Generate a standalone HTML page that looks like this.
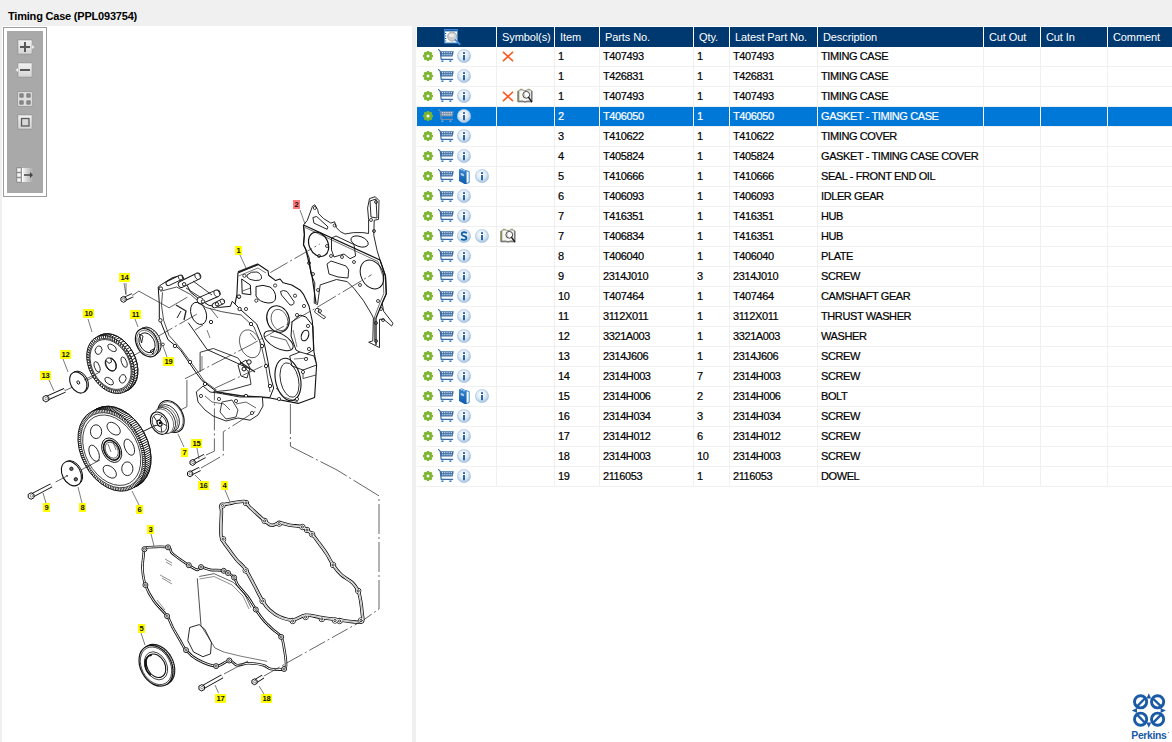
<!DOCTYPE html><html><head><meta charset="utf-8"><style>
*{margin:0;padding:0;box-sizing:border-box}
html,body{width:1172px;height:742px;overflow:hidden;background:#f0f0f0;font-family:"Liberation Sans",sans-serif}
.ab{position:absolute}
#title{left:8px;top:10px;font-size:11px;font-weight:bold;letter-spacing:-0.2px;color:#000;white-space:nowrap;line-height:13px}
#lp{left:2px;top:26px;width:410px;height:716px;background:#fff}
#rp{left:416px;top:26px;width:756px;height:716px;background:#fff}
.hd{background:#003870;height:20px;top:27px}
.ht{color:#fff;font-size:11px;line-height:20px;top:27px;white-space:nowrap;letter-spacing:-0.1px}
.vl{width:1px;background:#f0f0f0}
.hl{height:1px;background:#f0f0f0}
.tx{font-size:11px;line-height:19px;white-space:nowrap;color:#000;letter-spacing:-0.4px;-webkit-text-stroke:0.2px currentColor}
.sel{background:#0078d7;height:19px}
</style></head><body>

<svg width="0" height="0" style="position:absolute">
<defs>
<radialGradient id="ig" cx="0.45" cy="0.4" r="0.6"><stop offset="0" stop-color="#ffffff"/><stop offset="0.55" stop-color="#dfeaf5"/><stop offset="1" stop-color="#9fc0e0"/></radialGradient>
<symbol id="gear" viewBox="0 0 12 12">
<g fill="#7cb52e">
<circle cx="6" cy="6" r="3.9"/>
<rect x="4.8" y="0.9" width="2.4" height="10.2" rx="0.6"/>
<rect x="0.9" y="4.8" width="10.2" height="2.4" rx="0.6"/>
<rect x="4.8" y="0.9" width="2.4" height="10.2" rx="0.6" transform="rotate(45 6 6)"/>
<rect x="4.8" y="0.9" width="2.4" height="10.2" rx="0.6" transform="rotate(-45 6 6)"/>
</g>
<circle cx="6" cy="6" r="1.5" fill="#fff"/>
</symbol>
<symbol id="cart" viewBox="0 0 17 14">
<g fill="none" stroke="#3b6ca6" stroke-width="1.2" stroke-linecap="round" stroke-linejoin="round">
<path d="M0.6 0.6 L2.2 2.2 L3.2 10.4 L14.6 10.4"/>
</g>
<path d="M2.3 2.2 H15.8 L14.6 7.6 H3 Z" fill="#3b6ca6"/>
<g fill="#dfe8f2"><rect x="4" y="3.1" width="1.2" height="1.1"/><rect x="6.2" y="3.1" width="1.2" height="1.1"/><rect x="8.4" y="3.1" width="1.2" height="1.1"/><rect x="10.6" y="3.1" width="1.2" height="1.1"/><rect x="12.8" y="3.1" width="1.2" height="1.1"/>
<rect x="4.2" y="5.2" width="1.2" height="1.1"/><rect x="6.3" y="5.2" width="1.2" height="1.1"/><rect x="8.4" y="5.2" width="1.2" height="1.1"/><rect x="10.5" y="5.2" width="1.2" height="1.1"/><rect x="12.5" y="5.2" width="1.2" height="1.1"/></g>
<rect x="3.4" y="11.4" width="2" height="1.6" fill="#2f7fd0"/><rect x="11.4" y="11.4" width="2" height="1.6" fill="#2f7fd0"/>
</symbol>
<symbol id="carts" viewBox="0 0 17 14">
<g fill="none" stroke="#7a8da8" stroke-width="1.2" stroke-linecap="round" stroke-linejoin="round">
<path d="M0.6 0.6 L2.2 2.2 L3.2 10.4 L14.6 10.4"/>
</g>
<path d="M2.3 2.2 H15.8 L14.6 7.6 H3 Z" fill="#7a8da8"/>
<g fill="#dfe8f2"><rect x="4" y="3.1" width="1.2" height="1.1"/><rect x="6.2" y="3.1" width="1.2" height="1.1"/><rect x="8.4" y="3.1" width="1.2" height="1.1"/><rect x="10.6" y="3.1" width="1.2" height="1.1"/><rect x="12.8" y="3.1" width="1.2" height="1.1"/>
<rect x="4.2" y="5.2" width="1.2" height="1.1"/><rect x="6.3" y="5.2" width="1.2" height="1.1"/><rect x="8.4" y="5.2" width="1.2" height="1.1"/><rect x="10.5" y="5.2" width="1.2" height="1.1"/><rect x="12.5" y="5.2" width="1.2" height="1.1"/></g>
<rect x="3.4" y="11.4" width="2" height="1.6" fill="#8aa0c0"/><rect x="11.4" y="11.4" width="2" height="1.6" fill="#8aa0c0"/>
</symbol>
<symbol id="info" viewBox="0 0 15 15">
<circle cx="7" cy="7" r="6.8" fill="url(#ig)"/>
<circle cx="7" cy="7" r="6.5" fill="none" stroke="#a9c6e3" stroke-width="0.6"/>
<rect x="6" y="3.2" width="2" height="1.8" fill="#2e62a0"/>
<rect x="6" y="6" width="2" height="5.2" fill="#2e62a0"/>
</symbol>
<symbol id="sicon" viewBox="0 0 15 15">
<circle cx="7" cy="7" r="6.8" fill="url(#ig)"/>
<circle cx="7" cy="7" r="6.5" fill="none" stroke="#a9c6e3" stroke-width="0.6"/>
<path d="M9.7 4.3 Q8.7 3.2 7 3.2 Q4.6 3.3 4.7 5.3 Q4.8 6.6 7 7 Q9.4 7.4 9.4 9 Q9.3 10.8 7 10.8 Q5.1 10.8 4.2 9.8" fill="none" stroke="#0f60a3" stroke-width="1.8"/>
</symbol>
<symbol id="book" viewBox="0 0 11 17">
<linearGradient id="bkg" x1="0" y1="0" x2="0" y2="1"><stop offset="0" stop-color="#3a86cf"/><stop offset="1" stop-color="#0d5cae"/></linearGradient>
<path d="M7 2.6 L10.2 3.6 L10.2 14.4 L7 15.8 Z" fill="#fff" stroke="#2a7cc8" stroke-width="0.9"/>
<path d="M0 1.4 L2.6 0.2 L7.3 2.4 L7.3 15.9 L5.6 16 L0 12.9 Z" fill="url(#bkg)"/>
<path d="M1.2 1.6 L2.8 0.9 L4.2 1.6 L2.6 2.4 Z M3.6 2.6 L5 1.9 L6.4 2.7 L5 3.4 Z" fill="#bcd8f2"/>
<ellipse cx="3.4" cy="6.6" rx="2" ry="1.3" fill="#a9cbed" transform="rotate(25 3.4 6.6)"/>
</symbol>
<symbol id="xicon" viewBox="0 0 12 11">
<path d="M1 0.8 L11 10.2 M11 0.8 L1 10.2" stroke="#fb5a22" stroke-width="1.6" fill="none"/>
</symbol>
<symbol id="bookmag" viewBox="0 0 17 16">
<path d="M1.8 2.2 Q5 1.2 8 2.6 Q11 1.2 14.4 2.2 L14.4 13.2 Q11 12.2 8 13.6 Q5 12.2 1.8 13.2 Z" fill="#f6f6f2" stroke="#777" stroke-width="0.8"/>
<path d="M1 3 V13.8 L7.5 13.8 L8 14.5 L8.5 13.8 L15 13.8 V3" fill="none" stroke="#555" stroke-width="0.9"/>
<path d="M1 3 V13.8" stroke="#8a8a40" stroke-width="0.9"/>
<path d="M3 1.3 H5.5 M10.5 1.3 H13" stroke="#9a9a50" stroke-width="1"/>
<circle cx="9.3" cy="6.8" r="3.4" fill="#fff" fill-opacity="0.5" stroke="#333" stroke-width="0.9"/>
<path d="M7.2 5 Q6.8 7 8 9" stroke="#999" stroke-width="0.6" fill="none"/>
<path d="M11.6 9.4 L14.6 13.6" stroke="#1a1a1a" stroke-width="1.5" stroke-linecap="round"/>
</symbol>
<symbol id="hdicon" viewBox="0 0 17 16">
<rect x="0.5" y="0.5" width="13" height="13.5" fill="#fff" stroke="#3f86d0" stroke-width="1"/>
<rect x="1" y="1" width="12" height="1.4" fill="#1f5fa8"/>
<g fill="#1f5fa8"><rect x="1" y="4" width="1.3" height="1"/><rect x="1" y="6.5" width="1.3" height="1"/><rect x="1" y="9" width="1.3" height="1"/><rect x="1" y="11.5" width="1.3" height="1"/></g>
<circle cx="8.2" cy="7.6" r="4.6" fill="#cfcfcf" stroke="#9a9a9a" stroke-width="0.8"/>
<ellipse cx="7.6" cy="6.4" rx="2.8" ry="1.6" fill="#ececec"/>
<path d="M11.4 10.8 L15.6 15.2" stroke="#4a90d8" stroke-width="1.8" stroke-linecap="round"/>
</symbol>
</defs>
</svg>

<div id="title" class="ab">Timing Case (PPL093754)</div>
<div id="lp" class="ab"></div>
<div id="rp" class="ab"></div>
<div class="ab" style="left:3px;top:27px;width:44px;height:170px;border:1px solid #9c9c9c;background:#fff"></div>
<div class="ab" style="left:7px;top:31px;width:36px;height:162px;background:#a9a9a9"></div>
<svg class="ab" style="left:7px;top:31px" width="36" height="162" viewBox="7 31 36 162">
<defs>
<linearGradient id="bg1" x1="0" y1="0" x2="0" y2="1"><stop offset="0" stop-color="#f2f2f2"/><stop offset="1" stop-color="#d4d4d4"/></linearGradient>
<linearGradient id="bg2" x1="0" y1="0" x2="1" y2="0"><stop offset="0" stop-color="#f8f8f8"/><stop offset="0.6" stop-color="#c8c8c8"/><stop offset="1" stop-color="#a9a9a9"/></linearGradient>
</defs>
<!-- plus -->
<rect x="17.5" y="39.5" width="14.5" height="15" fill="#8a8a8a" opacity="0.5"/>
<rect x="18" y="40" width="14" height="14" fill="url(#bg1)" stroke="#9a9a9a" stroke-width="0.6"/>
<path d="M32 45 L34.5 47 L32 49 Z" fill="#eee"/>
<rect x="20" y="46" width="10" height="2" fill="#585858"/><rect x="24" y="42" width="2" height="10" fill="#585858"/>
<!-- minus -->
<rect x="17.5" y="62.5" width="14.5" height="15" fill="#8a8a8a" opacity="0.5"/>
<rect x="18" y="63" width="14" height="14" fill="url(#bg1)" stroke="#9a9a9a" stroke-width="0.6"/>
<path d="M18 68 L15.5 70 L18 72 Z" fill="#eee"/>
<rect x="20" y="69" width="10" height="2" fill="#585858"/>
<!-- grid -->
<rect x="17.5" y="91.5" width="14.5" height="15" fill="#8a8a8a" opacity="0.5"/>
<rect x="18" y="92" width="14" height="14" fill="#f4f4f4" stroke="#9a9a9a" stroke-width="0.6"/>
<rect x="24" y="93" width="2" height="12" fill="#dcdcdc"/><rect x="19" y="98" width="12" height="2" fill="#dcdcdc"/>
<g fill="#8c8c8c" stroke="#707070" stroke-width="0.8"><rect x="19.8" y="93.8" width="3.4" height="3.4"/><rect x="26.8" y="93.8" width="3.4" height="3.4"/><rect x="19.8" y="100.8" width="3.4" height="3.4"/><rect x="26.8" y="100.8" width="3.4" height="3.4"/></g>
<!-- square -->
<rect x="17.5" y="114.5" width="14.5" height="15" fill="#8a8a8a" opacity="0.5"/>
<rect x="18" y="115" width="14" height="14" fill="url(#bg1)" stroke="#9a9a9a" stroke-width="0.6"/>
<rect x="21.5" y="118.5" width="7.5" height="7.5" fill="#d8d8d8" stroke="#5a5a5a" stroke-width="1.3"/>
<!-- list arrow -->
<g stroke="#7a7a7a" stroke-width="0.8" fill="#f6f6f6"><rect x="16.8" y="167.8" width="4.4" height="4.4"/><rect x="16.8" y="172.8" width="4.4" height="4.4"/><rect x="16.8" y="177.8" width="4.4" height="4.4"/></g>
<rect x="22" y="168" width="11" height="14" fill="url(#bg2)"/>
<path d="M22.5 168 V182" stroke="#fff" stroke-width="1"/>
<path d="M24 174.3 H30 V172 L33 175 L30 178 V175.8 H24 Z" fill="#444"/>
</svg>

<svg class="ab" style="left:0;top:0" width="412" height="742" viewBox="0 0 412 742">
<path d="M312.5 206.2 L314.8 204.8 L317.6 209.5 L318.6 213.7 L323.3 218.4 L330.8 223.1 L334.6 221.8 L336.5 227.8 L340.3 231.6 L345.0 234.0 L353.5 232.6 L362.9 232.6 L368.6 233.5 L368.6 219.4 L367.6 208.0 L369.5 198.6 L375.2 196.7 L379.0 200.5 L378.5 219.4 L374.2 220.3 L373.8 235.4 L377.1 250.5 L380.0 260.0 L385.5 276.0 L386.3 293.7 L382.2 303.1 L383.6 311.2 L393.0 323.3 L391.6 326.0 L383.6 319.3 L379.5 319.3 L379.5 347.6 L368.7 342.2 L372.8 340.9 L373.4 318.0 L371.4 313.9 L363.3 300.4 L353.9 288.3 L347.2 281.6 L336.4 279.5 L320.2 284.9 L317.5 304.5 L314.2 303.1 L314.8 282.9 L310.8 273.5 L309.2 258.0 L305.4 248.6 L303.5 244.8 L304.4 234.5 L303.5 225.0 L307.3 220.3 Z" fill="#fff" stroke="#111" stroke-width="0.9" stroke-linejoin="round" />
<path d="M303.5 225 L380 260 L385.5 276 L386.3 293.7 L382.2 303.1 L376 318 L376 345" fill="none" stroke="#111" stroke-width="1.25" stroke-linejoin="round" />
<path d="M305 227.5 L378 261.5 L383 276.5 L383.8 293.5 L380 302.5 L374.5 317 L374.5 340" fill="none" stroke="#111" stroke-width="0.6" stroke-linejoin="round" />
<path d="M303.5 225 L304.4 234.5 L303.5 244.8 L306 250 L312 276 L316 303" fill="none" stroke="#111" stroke-width="1.25" stroke-linejoin="round" />
<path d="M316.0 308.5 L319.0 308.5 L318.0 312.0 L325.6 317.0 L324.0 319.0 L314.5 312.0 Z" fill="none" stroke="#111" stroke-width="0.8" stroke-linejoin="round" />
<ellipse cx="318.6" cy="244.3" rx="9.4" ry="12.7" fill="none" stroke="#111" stroke-width="1.2" transform="rotate(-25 318.6 244.3)"/>
<ellipse cx="372" cy="274.5" rx="11" ry="15" fill="none" stroke="#111" stroke-width="1" transform="rotate(-25 372 274.5)"/>
<path d="M312.9 217.5 L316.7 216.5 L328.0 226.9 L327.1 229.3 L313.9 223.1 Z" fill="none" stroke="#111" stroke-width="0.9" stroke-linejoin="round" />
<ellipse cx="359.6" cy="241.5" rx="9" ry="5" fill="none" stroke="#111" stroke-width="0.9" transform="rotate(20 359.6 241.5)"/>
<path d="M331.5 238.0 L336.0 236.0 L354.0 244.5 L355.6 256.0 L350.0 258.7 L344.0 254.0 L334.0 257.0 L331.5 250.0 Z" fill="none" stroke="#111" stroke-width="0.9" stroke-linejoin="round" />
<path d="M327.0 264.0 L331.0 261.0 L346.0 266.0 L348.7 270.0 L348.0 278.0 L338.0 277.0 L329.0 274.0 Z" fill="none" stroke="#111" stroke-width="0.9" stroke-linejoin="round" />
<path d="M370.0 201.0 L376.0 199.0 L377.0 218.0 L371.0 217.0 Z" fill="none" stroke="#111" stroke-width="0.9" stroke-linejoin="round" />
<circle cx="314.8" cy="208" r="1.5" fill="none" stroke="#111" stroke-width="0.8"/>
<circle cx="334.6" cy="225.5" r="1.5" fill="none" stroke="#111" stroke-width="0.8"/>
<circle cx="376" cy="202" r="1.5" fill="none" stroke="#111" stroke-width="0.8"/>
<circle cx="371" cy="220" r="1.5" fill="none" stroke="#111" stroke-width="0.8"/>
<circle cx="374" cy="231" r="1.5" fill="none" stroke="#111" stroke-width="0.8"/>
<circle cx="327" cy="246" r="1.5" fill="none" stroke="#111" stroke-width="0.8"/>
<circle cx="331" cy="256" r="1.5" fill="none" stroke="#111" stroke-width="0.8"/>
<circle cx="319" cy="256" r="1.5" fill="none" stroke="#111" stroke-width="0.8"/>
<circle cx="309" cy="263" r="1.5" fill="none" stroke="#111" stroke-width="0.8"/>
<circle cx="313" cy="274" r="1.5" fill="none" stroke="#111" stroke-width="0.8"/>
<circle cx="342" cy="257" r="1.5" fill="none" stroke="#111" stroke-width="0.8"/>
<circle cx="354" cy="262" r="1.5" fill="none" stroke="#111" stroke-width="0.8"/>
<circle cx="378" cy="301" r="1.5" fill="none" stroke="#111" stroke-width="0.8"/>
<circle cx="381" cy="309" r="1.5" fill="none" stroke="#111" stroke-width="0.8"/>
<circle cx="383" cy="320" r="1.5" fill="none" stroke="#111" stroke-width="0.8"/>
<circle cx="376" cy="341" r="1.5" fill="none" stroke="#111" stroke-width="0.8"/>
<circle cx="376" cy="323" r="1.5" fill="none" stroke="#111" stroke-width="0.8"/>
<circle cx="360" cy="285" r="1.5" fill="none" stroke="#111" stroke-width="0.8"/>
<circle cx="318" cy="290" r="1.5" fill="none" stroke="#111" stroke-width="0.8"/>
<circle cx="320" cy="311" r="1.5" fill="none" stroke="#111" stroke-width="0.8"/>
<path d="M237.9 273.1 L258.4 264.5 L268.1 271.0 L268.6 275.3 L275.6 280.6 L280.0 279.0 L283.2 282.8 L291.8 285.0 L300.4 290.3 L303.7 294.7 L309.0 306.0 L312.3 321.0 L313.4 340.5 L314.0 352.0 L316.6 365.0 L314.6 397.4 L298.2 403.4 L270.0 398.0 L242.0 396.0 L217.0 392.5 L236.9 294.7 Z" fill="#fff" stroke="#111" stroke-width="1.1" stroke-linejoin="round" />
<path d="M238.0 272.0 L258.4 264.0" fill="none" stroke="#222" stroke-width="1.8" />
<path d="M238.5 276.0 L258.0 268.0 L266.0 273.0" fill="none" stroke="#222" stroke-width="0.6" />
<path d="M241.7 279.0 L250.3 285.0 L250.9 294.7 L242.2 293.6 Z" fill="none" stroke="#111" stroke-width="1.0" stroke-linejoin="round" />
<path d="M242.5 291.0 L250.5 288.0" fill="none" stroke="#222" stroke-width="0.7" />
<path d="M247 275 Q251 271 257 272 Q262 274 261.5 278.5 Q260 281 255 280.5 Q249 280 247 277 Z" fill="none" stroke="#111" stroke-width="0.9" stroke-linejoin="round" />
<path d="M256 286.5 Q263 284 270 287 Q276 291 275.6 298 Q275 303.3 268 303 Q259 302 256 296 Z" fill="none" stroke="#111" stroke-width="1.0" stroke-linejoin="round" />
<path d="M280.5 291.5 Q283 289.5 287 291.5 L294 301.5 Q294.5 305.5 290 305 L281.5 295 Z" fill="none" stroke="#111" stroke-width="0.9" stroke-linejoin="round" />
<ellipse cx="278" cy="319" rx="11" ry="13.5" fill="none" stroke="#111" stroke-width="1.1" transform="rotate(-20 278 319)"/>
<ellipse cx="279.5" cy="320" rx="8" ry="11" fill="none" stroke="#111" stroke-width="0.6" transform="rotate(-20 279.5 320)"/>
<ellipse cx="278.6" cy="340.7" rx="16" ry="7.5" fill="none" stroke="#111" stroke-width="1.0" transform="rotate(28 278.6 340.7)"/>
<path d="M292.0 322.0 L300.0 315.0 L306.0 317.0 L313.0 326.0 L313.5 350.0 L305.0 355.0 L296.0 350.0 L291.0 336.0 Z" fill="none" stroke="#111" stroke-width="1.0" stroke-linejoin="round" />
<path d="M293.0 330.0 L297.0 347.0" fill="none" stroke="#222" stroke-width="0.6" />
<ellipse cx="305" cy="335.5" rx="3.5" ry="5.5" fill="none" stroke="#111" stroke-width="1.1" transform="rotate(20 305 335.5)"/>
<path d="M289.7 356.0 L300.0 352.0 L314.0 356.0 L316.6 365.0 L303.0 370.0 L292.0 366.0 Z" fill="#fff" stroke="#111" stroke-width="0.9" stroke-linejoin="round" />
<path d="M303.0 370.0 L303.0 378.5 L316.0 375.0" fill="none" stroke="#222" stroke-width="0.8" />
<path d="M294.0 359.0 L308.0 358.0" fill="none" stroke="#222" stroke-width="0.6" />
<ellipse cx="288" cy="379.5" rx="12.5" ry="21.5" fill="none" stroke="#111" stroke-width="1.1" transform="rotate(-12 288 379.5)"/>
<ellipse cx="289.5" cy="380" rx="9" ry="17.5" fill="none" stroke="#111" stroke-width="0.8" transform="rotate(-12 289.5 380)"/>
<path d="M270.0 336.0 L286.0 340.0 L291.0 350.0" fill="none" stroke="#222" stroke-width="0.7" />
<path d="M276.0 388.0 L284.0 397.0 L298.0 402.0" fill="none" stroke="#222" stroke-width="0.7" />
<circle cx="244.4" cy="275.8" r="1.6" fill="#fff" stroke="#111" stroke-width="0.8"/>
<circle cx="275.1" cy="285.5" r="1.6" fill="#fff" stroke="#111" stroke-width="0.8"/>
<circle cx="295" cy="295.7" r="1.6" fill="#fff" stroke="#111" stroke-width="0.8"/>
<circle cx="239" cy="296.8" r="1.6" fill="#fff" stroke="#111" stroke-width="0.8"/>
<circle cx="256.3" cy="300.6" r="1.6" fill="#fff" stroke="#111" stroke-width="0.8"/>
<circle cx="304" cy="306" r="1.6" fill="#fff" stroke="#111" stroke-width="0.8"/>
<circle cx="246" cy="309" r="1.6" fill="#fff" stroke="#111" stroke-width="0.8"/>
<circle cx="308" cy="326" r="1.6" fill="#fff" stroke="#111" stroke-width="0.8"/>
<circle cx="306" cy="359" r="1.6" fill="#fff" stroke="#111" stroke-width="0.8"/>
<circle cx="303" cy="372" r="1.6" fill="#fff" stroke="#111" stroke-width="0.8"/>
<circle cx="297" cy="399" r="1.6" fill="#fff" stroke="#111" stroke-width="0.8"/>
<circle cx="279" cy="399" r="1.6" fill="#fff" stroke="#111" stroke-width="0.8"/>
<circle cx="263" cy="395" r="1.6" fill="#fff" stroke="#111" stroke-width="0.8"/>
<circle cx="309" cy="349" r="1.6" fill="#fff" stroke="#111" stroke-width="0.8"/>
<circle cx="297" cy="315" r="1.6" fill="#fff" stroke="#111" stroke-width="0.8"/>
<path d="M158.2 287.0 L161.5 284.5 L172.2 277.8 L182.0 275.1 L186.0 283.0 L190.6 292.3 L200.3 299.9 L208.9 305.3 L219.7 307.4 L230.4 306.3 L232.2 301.3 L241.0 310.0 L256.7 324.0 L264.2 342.8 L268.0 361.7 L270.0 374.9 L273.7 388.1 L269.9 397.5 L241.6 395.7 L217.0 391.9 L202.0 380.6 L196.3 373.0 L180.2 349.6 L168.0 339.7 L163.6 329.0 L159.3 318.2 L159.3 303.1 Z" fill="#fff" stroke="#111" stroke-width="1.0" stroke-linejoin="round" />
<path d="M160.4 291.3 L176.6 287.0 L190.6 294.5 L205.6 307.4 L221.8 311.7 L241.2 315.0 L254.0 327.0 L261.0 344.0 L265.0 362.0 L268.0 380.0 L270.0 392.0" fill="none" stroke="#222" stroke-width="0.8" />
<path d="M162.5 292.3 L161.5 305.3 L163.6 320.3 L169.0 335.4 L181.0 349.0 L198.0 372.0 L204.0 381.0 L216.6 390.1" fill="none" stroke="#222" stroke-width="0.8" />
<path d="M168.3 283.3 L180.5 277.5" stroke="#111" stroke-width="5.5" stroke-linecap="round"/>
<path d="M168.3 283.3 L180.5 277.5" stroke="#fff" stroke-width="3.7" stroke-linecap="round"/>
<ellipse cx="180.5" cy="277.5" rx="2.55" ry="1.9249999999999998" transform="rotate(62 180.5 277.5)" fill="#fff" stroke="#111" stroke-width="0.8"/>
<path d="M181.4 284.3 L197.6 276.3" stroke="#111" stroke-width="7.2" stroke-linecap="round"/>
<path d="M181.4 284.3 L197.6 276.3" stroke="#fff" stroke-width="5.4" stroke-linecap="round"/>
<ellipse cx="197.6" cy="276.3" rx="3.4" ry="2.52" transform="rotate(62 197.6 276.3)" fill="#fff" stroke="#111" stroke-width="0.8"/>
<path d="M200.6 300.5 L216.8 293.4" stroke="#111" stroke-width="7.6" stroke-linecap="round"/>
<path d="M200.6 300.5 L216.8 293.4" stroke="#fff" stroke-width="5.8" stroke-linecap="round"/>
<ellipse cx="216.8" cy="293.4" rx="3.5999999999999996" ry="2.6599999999999997" transform="rotate(62 216.8 293.4)" fill="#fff" stroke="#111" stroke-width="0.8"/>
<path d="M214.5 305.5 L222.3 301.5" stroke="#111" stroke-width="5.5" stroke-linecap="round"/>
<path d="M214.5 305.5 L222.3 301.5" stroke="#fff" stroke-width="3.7" stroke-linecap="round"/>
<ellipse cx="222.3" cy="301.5" rx="2.55" ry="1.9249999999999998" transform="rotate(62 222.3 301.5)" fill="#fff" stroke="#111" stroke-width="0.8"/>
<path d="M186.0 288.0 L203.0 299.0" fill="none" stroke="#222" stroke-width="0.9" />
<path d="M193.0 281.0 L212.0 295.0" fill="none" stroke="#222" stroke-width="0.9" />
<circle cx="160.9" cy="288.6" r="1.7" fill="#fff" stroke="#111" stroke-width="0.9"/>
<circle cx="184.1" cy="284.2" r="1.7" fill="#fff" stroke="#111" stroke-width="0.9"/>
<circle cx="203" cy="301.5" r="1.7" fill="#fff" stroke="#111" stroke-width="0.9"/>
<circle cx="217" cy="304.2" r="1.7" fill="#fff" stroke="#111" stroke-width="0.9"/>
<circle cx="239.6" cy="309" r="1.7" fill="#fff" stroke="#111" stroke-width="0.9"/>
<circle cx="239" cy="296.6" r="1.7" fill="#fff" stroke="#111" stroke-width="0.9"/>
<circle cx="160.4" cy="320.3" r="1.7" fill="#fff" stroke="#111" stroke-width="0.9"/>
<circle cx="211" cy="322" r="1.7" fill="#fff" stroke="#111" stroke-width="0.9"/>
<circle cx="175" cy="346" r="1.7" fill="#fff" stroke="#111" stroke-width="0.9"/>
<circle cx="190" cy="362" r="1.7" fill="#fff" stroke="#111" stroke-width="0.9"/>
<circle cx="251" cy="324" r="1.7" fill="#fff" stroke="#111" stroke-width="0.9"/>
<circle cx="262" cy="346" r="1.7" fill="#fff" stroke="#111" stroke-width="0.9"/>
<circle cx="266" cy="366" r="1.7" fill="#fff" stroke="#111" stroke-width="0.9"/>
<circle cx="270" cy="386" r="1.7" fill="#fff" stroke="#111" stroke-width="0.9"/>
<circle cx="222" cy="394" r="1.7" fill="#fff" stroke="#111" stroke-width="0.9"/>
<circle cx="246" cy="396" r="1.7" fill="#fff" stroke="#111" stroke-width="0.9"/>
<circle cx="205" cy="384" r="1.7" fill="#fff" stroke="#111" stroke-width="0.9"/>
<ellipse cx="198.6" cy="313.4" rx="7.5" ry="11.5" fill="none" stroke="#111" stroke-width="0.9" transform="rotate(-20 198.6 313.4)"/>
<ellipse cx="250" cy="343.8" rx="10" ry="14.5" fill="none" stroke="#333" stroke-width="0.7" transform="rotate(-20 250 343.8)"/>
<path d="M176.0 305.0 L186.0 311.0 L184.0 320.0" fill="none" stroke="#222" stroke-width="1.3" />
<path d="M181.0 311.0 L177.0 318.0" fill="none" stroke="#222" stroke-width="1.0" />
<path d="M188.3 322.7 L207.2 349.6" fill="none" stroke="#222" stroke-width="1.0" />
<path d="M207.2 349.6 L249.0 368.5" fill="none" stroke="#222" stroke-width="1.0" />
<path d="M240.0 362.0 L255.0 372.0" fill="none" stroke="#222" stroke-width="1.4" />
<path d="M195.0 330.0 L203.0 325.0" fill="none" stroke="#222" stroke-width="0.7" />
<path d="M200.1 372.0 L200.1 352.3 L213.3 348.5 L237.8 357.9 L249.2 373.0 L251.0 384.3 L230.3 390.0 L213.3 391.9" fill="none" stroke="#222" stroke-width="0.9" />
<path d="M202.0 356.0 L202.0 370.0" fill="none" stroke="#222" stroke-width="0.6" />
<path d="M238.0 365.0 L246.0 360.0 L250.0 368.0 L247.0 378.0 L241.0 376.0 Z" fill="none" stroke="#111" stroke-width="0.9" stroke-linejoin="round" />
<circle cx="244" cy="369" r="2" fill="none" stroke="#111" stroke-width="1"/>
<circle cx="249" cy="362" r="2.2" fill="#fff" stroke="#111" stroke-width="1"/>
<path d="M210.0 308.0 L218.0 318.0" fill="none" stroke="#222" stroke-width="0.7" />
<path d="M207.0 330.0 L210.0 338.0" fill="none" stroke="#222" stroke-width="0.6" />
<path d="M250.0 333.0 L256.0 340.0" fill="none" stroke="#222" stroke-width="0.7" />
<path d="M196.3 391.9 L203.0 386.0 L210.0 392.0 L218.0 393.0 L240.0 397.0 L262.4 397.0 L263.0 406.0 L258.0 415.0 L250.0 420.2 L238.0 418.0 L226.0 421.0 L213.0 416.0 L205.0 410.0 L198.0 402.0 Z" fill="#fff" stroke="#111" stroke-width="0.9" stroke-linejoin="round" />
<path d="M205.0 396.0 L212.0 402.0 L224.0 404.0 L230.0 410.0" fill="none" stroke="#222" stroke-width="0.7" />
<path d="M236.0 404.0 L246.0 402.0 L256.0 408.0" fill="none" stroke="#222" stroke-width="0.7" />
<path d="M222.0 402.0 L232.0 400.0 L238.0 410.0 L236.0 417.0 L226.0 419.0 L220.0 412.0 Z" fill="none" stroke="#111" stroke-width="0.8" stroke-linejoin="round" />
<circle cx="201" cy="396" r="1.6" fill="#fff" stroke="#111" stroke-width="0.8"/>
<circle cx="219" cy="399" r="1.6" fill="#fff" stroke="#111" stroke-width="0.8"/>
<circle cx="236" cy="401" r="1.6" fill="#fff" stroke="#111" stroke-width="0.8"/>
<circle cx="252" cy="413" r="1.6" fill="#fff" stroke="#111" stroke-width="0.8"/>
<path d="M123.5 299.4 L132.6 295.3" stroke="#111" stroke-width="4.4" stroke-linecap="butt"/>
<path d="M123.5 299.4 L132.6 295.3" stroke="#fff" stroke-width="2.6000000000000005" stroke-linecap="butt"/>
<polygon points="126.1,300.9 123.5,302.4 120.9,300.9 120.9,297.9 123.5,296.4 126.1,297.9" fill="#fff" stroke="#111" stroke-width="1"/>
<circle cx="123.9" cy="299.2" r="1.3" fill="none" stroke="#444" stroke-width="0.6"/>
<path d="M132.6 295.3 L138.8 291.1 L169.1 307.8 L187.3 297.2" fill="none" stroke="#222" stroke-width="0.7" />
<line x1="124" y1="283" x2="126" y2="295" stroke="#222" stroke-width="0.6" />
<path d="M64.0 391.0 L86.0 381.0" fill="none" stroke="#222" stroke-width="0.7" />
<path d="M86.0 381.0 L140.0 352.0" fill="none" stroke="#222" stroke-width="0.7" />
<path d="M155.0 338.0 L199.2 312.8" fill="none" stroke="#222" stroke-width="0.7" stroke-dasharray="20 3 2 3"/>
<path d="M270.3 272.6 L319.8 244.0" fill="none" stroke="#222" stroke-width="0.7" stroke-dasharray="20 3 2 3"/>
<path d="M185.0 378.7 L200.1 371.1 L251.0 344.7 L314.3 309.0 L371.6 274.7" fill="none" stroke="#222" stroke-width="0.7" stroke-dasharray="22 3 2 3"/>
<path d="M156.0 425.0 L142.0 432.0" fill="none" stroke="#222" stroke-width="0.7" />
<path d="M215.2 388.0 L268.0 363.6" fill="none" stroke="#222" stroke-width="0.7" stroke-dasharray="22 3 2 3"/>
<g transform="translate(149.5 341.2) rotate(62) scale(1 0.7)">
<circle cx="0" cy="0" r="15" fill="#fff" stroke="#111" stroke-width="1.0" vector-effect="non-scaling-stroke" />
</g>
<path d="M140.0 329.5 l2.5 -1.5 M141.5 328.8 l2.5 -1.5 M143.2 328.6 l2.5 -1.5 M144.9 328.7 l2.5 -1.5 M146.8 329.1 l2.5 -1.5 M148.6 329.8 l2.5 -1.5 M150.4 330.9 l2.5 -1.5 M152.1 332.3 l2.5 -1.5 M153.6 333.9 l2.5 -1.5 M155.1 335.8 l2.5 -1.5 M156.3 337.8 l2.5 -1.5 M157.3 339.9 l2.5 -1.5 M158.0 342.1 l2.5 -1.5 M158.5 344.3 l2.5 -1.5 M158.6 346.5 l2.5 -1.5 M158.5 348.6 l2.5 -1.5 M158.1 350.5 l2.5 -1.5 M157.5 352.3 l2.5 -1.5 M156.6 353.8 l2.5 -1.5 M155.4 355.0 l2.5 -1.5" stroke="#555" stroke-width="0.6"/>
<g transform="translate(147 342.7) rotate(62) scale(1 0.7)">
<circle cx="0" cy="0" r="15" fill="#fff" stroke="#111" stroke-width="1.1" vector-effect="non-scaling-stroke" />
<circle cx="0" cy="0" r="10.5" fill="none" stroke="#111" stroke-width="1.0" vector-effect="non-scaling-stroke" />
<circle cx="0" cy="0" r="13.2" fill="none" stroke="#111" stroke-width="0.6" vector-effect="non-scaling-stroke" />
</g>
<path d="M139.5 334 L143 336 L141.5 343 Z" fill="none" stroke="#111" stroke-width="0.9" stroke-linejoin="round" />
<path d="M150 351 L154.5 348.5 L153 354 Z" fill="none" stroke="#111" stroke-width="0.9" stroke-linejoin="round" />
<line x1="135" y1="319" x2="138" y2="327" stroke="#222" stroke-width="0.6" />
<circle cx="162.9" cy="344.4" r="1.4" fill="none" stroke="#111" stroke-width="0.8"/>
<line x1="163" y1="346" x2="167" y2="357" stroke="#222" stroke-width="0.6" />
<g transform="translate(114.0 362.7) rotate(62) scale(1 0.7)">
<circle cx="0" cy="0" r="30.8" fill="#fff" stroke="#111" stroke-width="0.9" vector-effect="non-scaling-stroke" />
</g>
<path d="M125.06 391.69 l3.40 -1.80 M98.08 336.44 l3.40 -1.80 M100.13 335.85 l3.40 -1.80 M102.29 335.54 l3.40 -1.80 M104.53 335.50 l3.40 -1.80 M106.82 335.74 l3.40 -1.80 M109.15 336.26 l3.40 -1.80 M111.50 337.06 l3.40 -1.80 M113.84 338.11 l3.40 -1.80 M116.14 339.42 l3.40 -1.80 M118.39 340.98 l3.40 -1.80 M120.57 342.75 l3.40 -1.80 M122.65 344.74 l3.40 -1.80 M124.62 346.92 l3.40 -1.80 M126.45 349.27 l3.40 -1.80 M128.13 351.76 l3.40 -1.80 M129.64 354.38 l3.40 -1.80 M130.96 357.09 l3.40 -1.80 M132.09 359.88 l3.40 -1.80 M133.01 362.71 l3.40 -1.80 M133.72 365.56 l3.40 -1.80 M134.20 368.39 l3.40 -1.80 M134.46 371.19 l3.40 -1.80 M134.49 373.93 l3.40 -1.80 M134.29 376.57 l3.40 -1.80 M133.85 379.10 l3.40 -1.80 M133.20 381.49 l3.40 -1.80 M132.33 383.71 l3.40 -1.80 M131.24 385.75 l3.40 -1.80 M129.96 387.59 l3.40 -1.80 M128.50 389.20 l3.40 -1.80 M126.86 390.57 l3.40 -1.80" stroke="#111" stroke-width="0.95" fill="none"/>
<g transform="translate(114.0 362.7) rotate(62) scale(1 0.7)">
<circle cx="0" cy="0" r="30.8" fill="none" stroke="#111" stroke-width="0.9" vector-effect="non-scaling-stroke" />
</g>
<g transform="translate(110.6 364.5) rotate(62) scale(1 0.7)">
<circle cx="0" cy="0" r="30.8" fill="#fff" stroke="#111" stroke-width="1.0" vector-effect="non-scaling-stroke" />
<circle r="29.3" fill="none" stroke="#222" stroke-width="3.0" stroke-dasharray="1.44 1.44"/>
<circle cx="0" cy="0" r="27.6" fill="none" stroke="#111" stroke-width="0.8" vector-effect="non-scaling-stroke" />
<circle cx="0" cy="0" r="26.488" fill="none" stroke="#111" stroke-width="0.8" vector-effect="non-scaling-stroke" />
<ellipse cx="14.0" cy="13.0" rx="3.6" ry="5.6" transform="rotate(43 14.0 13.0)" fill="none" stroke="#111" stroke-width="0.9" vector-effect="non-scaling-stroke"/>
<ellipse cx="-4.3" cy="18.6" rx="3.6" ry="5.6" transform="rotate(103 -4.3 18.6)" fill="none" stroke="#111" stroke-width="0.9" vector-effect="non-scaling-stroke"/>
<ellipse cx="-18.3" cy="5.6" rx="3.6" ry="5.6" transform="rotate(163 -18.3 5.6)" fill="none" stroke="#111" stroke-width="0.9" vector-effect="non-scaling-stroke"/>
<ellipse cx="-14.0" cy="-13.0" rx="3.6" ry="5.6" transform="rotate(223 -14.0 -13.0)" fill="none" stroke="#111" stroke-width="0.9" vector-effect="non-scaling-stroke"/>
<ellipse cx="4.3" cy="-18.6" rx="3.6" ry="5.6" transform="rotate(283 4.3 -18.6)" fill="none" stroke="#111" stroke-width="0.9" vector-effect="non-scaling-stroke"/>
<ellipse cx="18.3" cy="-5.6" rx="3.6" ry="5.6" transform="rotate(343 18.3 -5.6)" fill="none" stroke="#111" stroke-width="0.9" vector-effect="non-scaling-stroke"/>
<circle cx="0" cy="0" r="7" fill="none" stroke="#111" stroke-width="1.0" vector-effect="non-scaling-stroke" />
</g>
<g transform="translate(111.2 364.5) rotate(62) scale(1 0.7)">
<path d="M-6 -4 A7 7 0 1 1 -6 4 L-2 2 L-2 -2 Z" fill="none" stroke="#111" stroke-width="0.9" vector-effect="non-scaling-stroke"/>
</g>
<g transform="translate(117.3 447.2) rotate(62) scale(1 0.7)">
<circle cx="0" cy="0" r="43.5" fill="#fff" stroke="#111" stroke-width="0.9" vector-effect="non-scaling-stroke" />
</g>
<path d="M91.28 411.79 l5.60 -3.00 M92.71 411.10 l5.60 -3.00 M94.20 410.51 l5.60 -3.00 M95.74 410.03 l5.60 -3.00 M97.31 409.66 l5.60 -3.00 M98.93 409.40 l5.60 -3.00 M100.59 409.25 l5.60 -3.00 M102.27 409.22 l5.60 -3.00 M103.98 409.30 l5.60 -3.00 M105.71 409.49 l5.60 -3.00 M107.46 409.79 l5.60 -3.00 M109.22 410.20 l5.60 -3.00 M110.98 410.72 l5.60 -3.00 M112.75 411.35 l5.60 -3.00 M114.51 412.09 l5.60 -3.00 M116.27 412.93 l5.60 -3.00 M118.02 413.88 l5.60 -3.00 M119.74 414.92 l5.60 -3.00 M121.45 416.06 l5.60 -3.00 M123.13 417.29 l5.60 -3.00 M124.77 418.62 l5.60 -3.00 M126.38 420.03 l5.60 -3.00 M127.95 421.52 l5.60 -3.00 M129.48 423.09 l5.60 -3.00 M130.96 424.74 l5.60 -3.00 M132.38 426.45 l5.60 -3.00 M133.75 428.23 l5.60 -3.00 M135.06 430.07 l5.60 -3.00 M136.30 431.97 l5.60 -3.00 M137.48 433.91 l5.60 -3.00 M138.59 435.90 l5.60 -3.00 M139.62 437.93 l5.60 -3.00 M140.57 440.00 l5.60 -3.00 M141.45 442.09 l5.60 -3.00 M142.24 444.20 l5.60 -3.00 M142.96 446.33 l5.60 -3.00 M143.58 448.47 l5.60 -3.00 M144.12 450.62 l5.60 -3.00 M144.57 452.76 l5.60 -3.00 M144.93 454.90 l5.60 -3.00 M145.19 457.02 l5.60 -3.00 M145.37 459.13 l5.60 -3.00 M145.45 461.21 l5.60 -3.00 M145.45 463.26 l5.60 -3.00 M145.35 465.28 l5.60 -3.00 M145.15 467.25 l5.60 -3.00 M144.87 469.18 l5.60 -3.00 M144.49 471.05 l5.60 -3.00 M144.02 472.87 l5.60 -3.00 M143.47 474.63 l5.60 -3.00 M142.83 476.31 l5.60 -3.00 M142.10 477.93 l5.60 -3.00 M141.29 479.47 l5.60 -3.00 M140.40 480.93 l5.60 -3.00 M139.43 482.31 l5.60 -3.00 M138.38 483.60 l5.60 -3.00 M137.27 484.80 l5.60 -3.00 M136.08 485.90 l5.60 -3.00 M134.82 486.90 l5.60 -3.00 M133.50 487.81 l5.60 -3.00" stroke="#111" stroke-width="0.95" fill="none"/>
<g transform="translate(117.3 447.2) rotate(62) scale(1 0.7)">
<circle cx="0" cy="0" r="43.5" fill="none" stroke="#111" stroke-width="0.9" vector-effect="non-scaling-stroke" />
</g>
<g transform="translate(111.7 450.2) rotate(62) scale(1 0.7)">
<circle cx="0" cy="0" r="43.5" fill="#fff" stroke="#111" stroke-width="1.0" vector-effect="non-scaling-stroke" />
<circle r="41.8" fill="none" stroke="#222" stroke-width="3.4" stroke-dasharray="1.09 1.09"/>
<circle cx="0" cy="0" r="39.9" fill="none" stroke="#111" stroke-width="0.8" vector-effect="non-scaling-stroke" />
<circle cx="0" cy="0" r="37.41" fill="none" stroke="#111" stroke-width="0.8" vector-effect="non-scaling-stroke" />
<ellipse cx="18.1" cy="16.9" rx="6.4" ry="8.6" transform="rotate(43 18.1 16.9)" fill="none" stroke="#111" stroke-width="0.9" vector-effect="non-scaling-stroke"/>
<ellipse cx="-5.6" cy="24.2" rx="6.4" ry="8.6" transform="rotate(103 -5.6 24.2)" fill="none" stroke="#111" stroke-width="0.9" vector-effect="non-scaling-stroke"/>
<ellipse cx="-23.7" cy="7.3" rx="6.4" ry="8.6" transform="rotate(163 -23.7 7.3)" fill="none" stroke="#111" stroke-width="0.9" vector-effect="non-scaling-stroke"/>
<ellipse cx="-18.1" cy="-16.9" rx="6.4" ry="8.6" transform="rotate(223 -18.1 -16.9)" fill="none" stroke="#111" stroke-width="0.9" vector-effect="non-scaling-stroke"/>
<ellipse cx="5.6" cy="-24.2" rx="6.4" ry="8.6" transform="rotate(283 5.6 -24.2)" fill="none" stroke="#111" stroke-width="0.9" vector-effect="non-scaling-stroke"/>
<ellipse cx="23.7" cy="-7.3" rx="6.4" ry="8.6" transform="rotate(343 23.7 -7.3)" fill="none" stroke="#111" stroke-width="0.9" vector-effect="non-scaling-stroke"/>
<circle cx="0" cy="0" r="13" fill="none" stroke="#111" stroke-width="1.0" vector-effect="non-scaling-stroke" />
</g>
<g transform="translate(111.7 450.2) rotate(62) scale(1 0.7)">
<circle cx="0" cy="0" r="10.5" fill="none" stroke="#111" stroke-width="1.5" vector-effect="non-scaling-stroke" />
<circle cx="0" cy="0" r="8.5" fill="none" stroke="#111" stroke-width="0.7" vector-effect="non-scaling-stroke" />
</g>
<path d="M103.0 447.0 L106.0 455.0" fill="none" stroke="#222" stroke-width="0.6" />
<path d="M108.0 444.0 L111.0 452.0" fill="none" stroke="#222" stroke-width="0.6" />
<path d="M113.0 442.0 L116.0 450.0" fill="none" stroke="#222" stroke-width="0.6" />
<g transform="translate(79.8 381.7) rotate(62) scale(1 0.7)">
<circle cx="0" cy="0" r="11.2" fill="#fff" stroke="#111" stroke-width="1.0" vector-effect="non-scaling-stroke" />
</g>
<g transform="translate(78.3 382.5) rotate(62) scale(1 0.7)">
<circle cx="0" cy="0" r="11.2" fill="#fff" stroke="#111" stroke-width="1.1" vector-effect="non-scaling-stroke" />
<circle cx="0" cy="0" r="1.8" fill="none" stroke="#111" stroke-width="1.0" vector-effect="non-scaling-stroke" />
</g>
<path d="M84.0 380.0 L100.0 372.0" fill="none" stroke="#222" stroke-width="0.7" />
<line x1="63" y1="359" x2="68" y2="372" stroke="#222" stroke-width="0.6" />
<path d="M45.9 398.7 L64.7 390.3" stroke="#111" stroke-width="4.8" stroke-linecap="butt"/>
<path d="M45.9 398.7 L64.7 390.3" stroke="#fff" stroke-width="3.0" stroke-linecap="butt"/>
<polygon points="48.8,400.3 45.9,402.0 43.0,400.3 43.0,397.1 45.9,395.4 48.8,397.1" fill="#fff" stroke="#111" stroke-width="1"/>
<circle cx="46.3" cy="398.5" r="1.3" fill="none" stroke="#444" stroke-width="0.6"/>
<line x1="49" y1="380" x2="54" y2="391" stroke="#222" stroke-width="0.6" />
<line x1="88" y1="319" x2="92" y2="332" stroke="#222" stroke-width="0.6" />
<g transform="translate(171 416.5) rotate(62) scale(1 0.7)">
<circle cx="0" cy="0" r="17" fill="#fff" stroke="#111" stroke-width="1.1" vector-effect="non-scaling-stroke" />
<circle cx="0" cy="0" r="15.8" fill="none" stroke="#111" stroke-width="0.6" vector-effect="non-scaling-stroke" />
</g>
<g transform="translate(168.2 418.2) rotate(62) scale(1 0.7)">
<circle cx="0" cy="0" r="14.5" fill="#fff" stroke="#111" stroke-width="0.9" vector-effect="non-scaling-stroke" />
</g>
<g transform="translate(166.6 419.3) rotate(62) scale(1 0.7)">
<circle cx="0" cy="0" r="14" fill="#fff" stroke="#111" stroke-width="0.6" vector-effect="non-scaling-stroke" />
</g>
<g transform="translate(165 420.3) rotate(62) scale(1 0.7)">
<circle cx="0" cy="0" r="13.6" fill="#fff" stroke="#111" stroke-width="0.9" vector-effect="non-scaling-stroke" />
</g>
<g transform="translate(163.4 421.3) rotate(62) scale(1 0.7)">
<circle cx="0" cy="0" r="13.2" fill="#fff" stroke="#111" stroke-width="0.6" vector-effect="non-scaling-stroke" />
</g>
<g transform="translate(159.5 423.2) rotate(62) scale(1 0.7)">
<circle cx="0" cy="0" r="11.8" fill="#fff" stroke="#111" stroke-width="1.1" vector-effect="non-scaling-stroke" />
<circle cx="0" cy="0" r="9.5" fill="none" stroke="#111" stroke-width="0.8" vector-effect="non-scaling-stroke" />
<circle cx="0" cy="0" r="3.2" fill="none" stroke="#111" stroke-width="1.2" vector-effect="non-scaling-stroke" />
</g>
<path d="M161.1 426.3 L161.7 432.1" stroke="#222" stroke-width="0.9"/>
<path d="M158.0 425.2 L153.5 426.0" stroke="#222" stroke-width="0.9"/>
<path d="M156.9 421.4 L153.6 416.0" stroke="#222" stroke-width="0.9"/>
<path d="M159.4 420.0 L161.9 415.9" stroke="#222" stroke-width="0.9"/>
<path d="M162.1 423.1 L166.9 425.9" stroke="#222" stroke-width="0.9"/>
<circle cx="160" cy="423" r="1.3" fill="#111"/>
<path d="M156.0 425.0 L142.0 432.0" fill="none" stroke="#222" stroke-width="0.7" />
<line x1="178" y1="434" x2="184" y2="447" stroke="#222" stroke-width="0.6" />
<path d="M180.4 410.0 L186.9 406.7 L186.9 380.0" fill="none" stroke="#222" stroke-width="0.7" />
<g transform="translate(72.6 472.9) rotate(62) scale(1 0.7)">
<circle cx="0" cy="0" r="13" fill="#fff" stroke="#111" stroke-width="1.0" vector-effect="non-scaling-stroke" />
</g>
<g transform="translate(71.4 473.6) rotate(62) scale(1 0.7)">
<circle cx="0" cy="0" r="13" fill="#fff" stroke="#111" stroke-width="1.1" vector-effect="non-scaling-stroke" />
</g>
<circle cx="71.4" cy="468.8" r="1.7" fill="#666" stroke="#111" stroke-width="0.9"/>
<circle cx="75.8" cy="479.3" r="1.7" fill="#666" stroke="#111" stroke-width="0.9"/>
<circle cx="67" cy="475.8" r="0.9" fill="#111"/>
<path d="M55.6 482.0 L66.0 476.5" fill="none" stroke="#222" stroke-width="0.7" />
<path d="M81.0 470.0 L100.0 460.0" fill="none" stroke="#222" stroke-width="0.7" />
<path d="M31.1 496 L51.3 485.4" stroke="#111" stroke-width="4.4" stroke-linecap="butt"/>
<path d="M31.1 496 L51.3 485.4" stroke="#fff" stroke-width="2.6000000000000005" stroke-linecap="butt"/>
<polygon points="34.0,497.6 31.1,499.3 28.2,497.6 28.2,494.4 31.1,492.7 34.0,494.4" fill="#fff" stroke="#111" stroke-width="1"/>
<circle cx="31.5" cy="495.8" r="1.3" fill="none" stroke="#444" stroke-width="0.6"/>
<line x1="43" y1="493" x2="46" y2="503" stroke="#222" stroke-width="0.6" />
<line x1="78" y1="487" x2="82" y2="503" stroke="#222" stroke-width="0.6" />
<line x1="132" y1="491" x2="139" y2="505" stroke="#222" stroke-width="0.6" />
<path d="M192.6 462.5 L204.7 456" stroke="#111" stroke-width="4.4" stroke-linecap="butt"/>
<path d="M192.6 462.5 L204.7 456" stroke="#fff" stroke-width="2.6000000000000005" stroke-linecap="butt"/>
<polygon points="195.2,464.0 192.6,465.5 190.0,464.0 190.0,461.0 192.6,459.5 195.2,461.0" fill="#fff" stroke="#111" stroke-width="1"/>
<circle cx="193.0" cy="462.3" r="1.3" fill="none" stroke="#444" stroke-width="0.6"/>
<path d="M190.1 473.8 L199.8 469" stroke="#111" stroke-width="4.4" stroke-linecap="butt"/>
<path d="M190.1 473.8 L199.8 469" stroke="#fff" stroke-width="2.6000000000000005" stroke-linecap="butt"/>
<polygon points="192.7,475.3 190.1,476.8 187.5,475.3 187.5,472.3 190.1,470.8 192.7,472.3" fill="#fff" stroke="#111" stroke-width="1"/>
<circle cx="190.5" cy="473.6" r="1.3" fill="none" stroke="#444" stroke-width="0.6"/>
<path d="M206.0 455.0 L214.4 451.2 L214.4 389.7" fill="none" stroke="#222" stroke-width="0.7" stroke-dasharray="22 3 2 3"/>
<path d="M201.0 468.0 L223.3 455.2 L223.3 431.8 L256.4 410.7" fill="none" stroke="#222" stroke-width="0.7" stroke-dasharray="22 3 2 3"/>
<line x1="197" y1="448" x2="199" y2="459" stroke="#222" stroke-width="0.6" />
<line x1="195" y1="475" x2="201" y2="481" stroke="#222" stroke-width="0.6" />
<path d="M290.4 404.0 L290.4 446.3 L337.0 470.0 L379.0 495.9 L379.0 609.0 L362.9 620.4" fill="none" stroke="#222" stroke-width="0.7" stroke-dasharray="30 3 2 3"/>
<circle cx="222.5" cy="505.5" r="2.7" fill="#fff" stroke="#111" stroke-width="0.9"/>
<circle cx="246" cy="503" r="2.7" fill="#fff" stroke="#111" stroke-width="0.9"/>
<circle cx="264.6" cy="520.9" r="2.7" fill="#fff" stroke="#111" stroke-width="0.9"/>
<circle cx="279.2" cy="523.6" r="2.7" fill="#fff" stroke="#111" stroke-width="0.9"/>
<circle cx="302.4" cy="527" r="2.7" fill="#fff" stroke="#111" stroke-width="0.9"/>
<circle cx="307" cy="530" r="2.7" fill="#fff" stroke="#111" stroke-width="0.9"/>
<circle cx="312.1" cy="534.3" r="2.7" fill="#fff" stroke="#111" stroke-width="0.9"/>
<circle cx="333.1" cy="565" r="2.7" fill="#fff" stroke="#111" stroke-width="0.9"/>
<circle cx="358.2" cy="590.9" r="2.7" fill="#fff" stroke="#111" stroke-width="0.9"/>
<circle cx="361" cy="620.5" r="2.7" fill="#fff" stroke="#111" stroke-width="0.9"/>
<circle cx="339.6" cy="621" r="2.7" fill="#fff" stroke="#111" stroke-width="0.9"/>
<circle cx="335" cy="620.5" r="2.7" fill="#fff" stroke="#111" stroke-width="0.9"/>
<circle cx="321.8" cy="619" r="2.7" fill="#fff" stroke="#111" stroke-width="0.9"/>
<circle cx="305.6" cy="617" r="2.7" fill="#fff" stroke="#111" stroke-width="0.9"/>
<circle cx="292.7" cy="621" r="2.7" fill="#fff" stroke="#111" stroke-width="0.9"/>
<circle cx="223.1" cy="539.2" r="2.7" fill="#fff" stroke="#111" stroke-width="0.9"/>
<circle cx="245.7" cy="570.5" r="2.7" fill="#fff" stroke="#111" stroke-width="0.9"/>
<circle cx="262.6" cy="601" r="2.7" fill="#fff" stroke="#111" stroke-width="0.9"/>
<path d="M220.9 505.8 C222.2 504.5 225.1 504.3 229.0 503.6 C232.9 502.9 240.7 500.9 244.1 501.5 C247.5 502.1 246.4 504.0 249.5 506.9 C252.6 509.8 258.8 515.7 262.4 518.7 C266.0 521.8 268.2 524.5 271.1 525.2 C274.0 525.9 276.4 523.0 279.7 523.0 C283.0 523.0 287.2 524.7 291.0 525.4 C294.8 526.1 298.9 525.5 302.4 527.0 C305.9 528.5 309.4 531.7 312.1 534.3 C314.8 536.9 316.1 539.2 318.5 542.4 C320.9 545.6 324.2 549.9 326.6 553.7 C329.0 557.5 330.7 561.5 333.1 565.0 C335.5 568.5 338.0 571.7 341.2 574.7 C344.4 577.7 349.7 580.1 352.5 582.8 C355.3 585.5 356.8 587.9 358.2 590.9 C359.6 593.9 359.9 596.8 360.6 600.6 C361.3 604.4 361.9 610.1 362.2 613.6 C362.5 617.1 363.8 620.4 362.2 621.7 C360.6 623.1 356.3 622.0 352.5 621.7 C348.7 621.4 344.7 620.7 339.6 620.0 C334.5 619.3 327.5 618.4 321.8 617.6 C316.1 616.8 310.5 614.8 305.6 615.2 C300.8 615.6 297.0 619.7 292.7 620.0 C288.4 620.3 283.5 618.4 279.7 616.8 C275.9 615.2 272.9 612.9 270.0 610.3 C267.1 607.7 266.6 607.6 262.6 601.0 C258.7 594.4 250.6 577.4 246.3 570.5 C242.0 563.6 239.8 563.7 236.6 559.7 C233.4 555.8 229.4 550.4 226.9 546.8 C224.4 543.2 222.5 541.4 221.5 538.1 C220.5 534.9 220.9 531.8 220.9 527.3 C220.9 522.8 221.5 514.8 221.5 511.2 C221.5 507.6 219.7 507.1 220.9 505.8 Z" fill="none" stroke="#111" stroke-width="3.4"/>
<path d="M220.9 505.8 C222.2 504.5 225.1 504.3 229.0 503.6 C232.9 502.9 240.7 500.9 244.1 501.5 C247.5 502.1 246.4 504.0 249.5 506.9 C252.6 509.8 258.8 515.7 262.4 518.7 C266.0 521.8 268.2 524.5 271.1 525.2 C274.0 525.9 276.4 523.0 279.7 523.0 C283.0 523.0 287.2 524.7 291.0 525.4 C294.8 526.1 298.9 525.5 302.4 527.0 C305.9 528.5 309.4 531.7 312.1 534.3 C314.8 536.9 316.1 539.2 318.5 542.4 C320.9 545.6 324.2 549.9 326.6 553.7 C329.0 557.5 330.7 561.5 333.1 565.0 C335.5 568.5 338.0 571.7 341.2 574.7 C344.4 577.7 349.7 580.1 352.5 582.8 C355.3 585.5 356.8 587.9 358.2 590.9 C359.6 593.9 359.9 596.8 360.6 600.6 C361.3 604.4 361.9 610.1 362.2 613.6 C362.5 617.1 363.8 620.4 362.2 621.7 C360.6 623.1 356.3 622.0 352.5 621.7 C348.7 621.4 344.7 620.7 339.6 620.0 C334.5 619.3 327.5 618.4 321.8 617.6 C316.1 616.8 310.5 614.8 305.6 615.2 C300.8 615.6 297.0 619.7 292.7 620.0 C288.4 620.3 283.5 618.4 279.7 616.8 C275.9 615.2 272.9 612.9 270.0 610.3 C267.1 607.7 266.6 607.6 262.6 601.0 C258.7 594.4 250.6 577.4 246.3 570.5 C242.0 563.6 239.8 563.7 236.6 559.7 C233.4 555.8 229.4 550.4 226.9 546.8 C224.4 543.2 222.5 541.4 221.5 538.1 C220.5 534.9 220.9 531.8 220.9 527.3 C220.9 522.8 221.5 514.8 221.5 511.2 C221.5 507.6 219.7 507.1 220.9 505.8 Z" fill="none" stroke="#fff" stroke-width="1.8"/>
<path d="M220.9 505.8 C222.2 504.5 225.1 504.3 229.0 503.6 C232.9 502.9 240.7 500.9 244.1 501.5 C247.5 502.1 246.4 504.0 249.5 506.9 C252.6 509.8 258.8 515.7 262.4 518.7 C266.0 521.8 268.2 524.5 271.1 525.2 C274.0 525.9 276.4 523.0 279.7 523.0 C283.0 523.0 287.2 524.7 291.0 525.4 C294.8 526.1 298.9 525.5 302.4 527.0 C305.9 528.5 309.4 531.7 312.1 534.3 C314.8 536.9 316.1 539.2 318.5 542.4 C320.9 545.6 324.2 549.9 326.6 553.7 C329.0 557.5 330.7 561.5 333.1 565.0 C335.5 568.5 338.0 571.7 341.2 574.7 C344.4 577.7 349.7 580.1 352.5 582.8 C355.3 585.5 356.8 587.9 358.2 590.9 C359.6 593.9 359.9 596.8 360.6 600.6 C361.3 604.4 361.9 610.1 362.2 613.6 C362.5 617.1 363.8 620.4 362.2 621.7 C360.6 623.1 356.3 622.0 352.5 621.7 C348.7 621.4 344.7 620.7 339.6 620.0 C334.5 619.3 327.5 618.4 321.8 617.6 C316.1 616.8 310.5 614.8 305.6 615.2 C300.8 615.6 297.0 619.7 292.7 620.0 C288.4 620.3 283.5 618.4 279.7 616.8 C275.9 615.2 272.9 612.9 270.0 610.3 C267.1 607.7 266.6 607.6 262.6 601.0 C258.7 594.4 250.6 577.4 246.3 570.5 C242.0 563.6 239.8 563.7 236.6 559.7 C233.4 555.8 229.4 550.4 226.9 546.8 C224.4 543.2 222.5 541.4 221.5 538.1 C220.5 534.9 220.9 531.8 220.9 527.3 C220.9 522.8 221.5 514.8 221.5 511.2 C221.5 507.6 219.7 507.1 220.9 505.8 Z" fill="none" stroke="#777" stroke-width="0.5"/>
<circle cx="222.5" cy="505.5" r="2.2" fill="#fff"/>
<circle cx="222.5" cy="505.5" r="1.1" fill="none" stroke="#111" stroke-width="0.8"/>
<circle cx="246" cy="503" r="2.2" fill="#fff"/>
<circle cx="246" cy="503" r="1.1" fill="none" stroke="#111" stroke-width="0.8"/>
<circle cx="264.6" cy="520.9" r="2.2" fill="#fff"/>
<circle cx="264.6" cy="520.9" r="1.1" fill="none" stroke="#111" stroke-width="0.8"/>
<circle cx="279.2" cy="523.6" r="2.2" fill="#fff"/>
<circle cx="279.2" cy="523.6" r="1.1" fill="none" stroke="#111" stroke-width="0.8"/>
<circle cx="302.4" cy="527" r="2.2" fill="#fff"/>
<circle cx="302.4" cy="527" r="1.1" fill="none" stroke="#111" stroke-width="0.8"/>
<circle cx="307" cy="530" r="2.2" fill="#fff"/>
<circle cx="307" cy="530" r="1.1" fill="none" stroke="#111" stroke-width="0.8"/>
<circle cx="312.1" cy="534.3" r="2.2" fill="#fff"/>
<circle cx="312.1" cy="534.3" r="1.1" fill="none" stroke="#111" stroke-width="0.8"/>
<circle cx="333.1" cy="565" r="2.2" fill="#fff"/>
<circle cx="333.1" cy="565" r="1.1" fill="none" stroke="#111" stroke-width="0.8"/>
<circle cx="358.2" cy="590.9" r="2.2" fill="#fff"/>
<circle cx="358.2" cy="590.9" r="1.1" fill="none" stroke="#111" stroke-width="0.8"/>
<circle cx="361" cy="620.5" r="2.2" fill="#fff"/>
<circle cx="361" cy="620.5" r="1.1" fill="none" stroke="#111" stroke-width="0.8"/>
<circle cx="339.6" cy="621" r="2.2" fill="#fff"/>
<circle cx="339.6" cy="621" r="1.1" fill="none" stroke="#111" stroke-width="0.8"/>
<circle cx="335" cy="620.5" r="2.2" fill="#fff"/>
<circle cx="335" cy="620.5" r="1.1" fill="none" stroke="#111" stroke-width="0.8"/>
<circle cx="321.8" cy="619" r="2.2" fill="#fff"/>
<circle cx="321.8" cy="619" r="1.1" fill="none" stroke="#111" stroke-width="0.8"/>
<circle cx="305.6" cy="617" r="2.2" fill="#fff"/>
<circle cx="305.6" cy="617" r="1.1" fill="none" stroke="#111" stroke-width="0.8"/>
<circle cx="292.7" cy="621" r="2.2" fill="#fff"/>
<circle cx="292.7" cy="621" r="1.1" fill="none" stroke="#111" stroke-width="0.8"/>
<circle cx="223.1" cy="539.2" r="2.2" fill="#fff"/>
<circle cx="223.1" cy="539.2" r="1.1" fill="none" stroke="#111" stroke-width="0.8"/>
<circle cx="245.7" cy="570.5" r="2.2" fill="#fff"/>
<circle cx="245.7" cy="570.5" r="1.1" fill="none" stroke="#111" stroke-width="0.8"/>
<circle cx="262.6" cy="601" r="2.2" fill="#fff"/>
<circle cx="262.6" cy="601" r="1.1" fill="none" stroke="#111" stroke-width="0.8"/>
<line x1="225" y1="490" x2="230" y2="502" stroke="#222" stroke-width="0.6" />
<path d="M144.4 549.2 C145.2 547.8 144.3 547.6 148.2 547.3 C152.1 547.0 164.1 546.4 168.0 547.3 C171.9 548.2 169.8 550.9 171.8 552.9 C173.9 554.9 177.5 557.5 180.3 559.5 C183.1 561.5 186.0 563.5 188.8 565.2 C191.6 566.9 195.3 569.6 197.3 569.9 C199.3 570.2 198.8 567.1 201.0 567.1 C203.2 567.1 206.7 569.3 210.5 569.9 C214.3 570.5 219.8 569.5 223.7 570.8 C227.6 572.1 231.8 575.1 234.1 577.5 C236.4 579.9 235.5 581.7 237.8 585.0 C240.2 588.3 245.2 593.2 248.2 597.3 C251.2 601.4 253.3 605.7 255.8 609.5 C258.3 613.3 260.5 616.6 263.3 619.9 C266.1 623.2 269.7 626.5 272.7 629.3 C275.7 632.1 279.3 633.8 281.2 636.9 C283.1 640.0 283.3 643.8 284.1 648.2 C284.9 652.6 286.0 659.8 286.0 663.3 C286.0 666.8 286.6 668.0 284.1 669.0 C281.6 670.0 274.3 669.6 270.8 669.0 C267.3 668.4 267.1 666.2 263.3 665.2 C259.5 664.2 252.6 663.3 248.2 663.3 C243.8 663.3 240.1 665.7 236.9 665.2 C233.8 664.7 232.8 660.4 229.3 660.5 C225.8 660.6 221.4 666.3 216.1 666.1 C210.8 665.9 202.3 662.2 197.3 659.5 C192.3 656.8 188.8 653.2 186.0 650.1 C183.2 647.0 182.5 644.5 180.3 640.7 C178.1 636.9 174.9 631.6 172.7 627.5 C170.5 623.4 170.2 620.5 167.1 616.1 C164.0 611.7 157.5 606.2 153.9 601.0 C150.3 595.8 147.3 590.3 145.4 585.0 C143.5 579.7 142.8 573.9 142.5 569.0 C142.2 564.1 143.2 559.1 143.5 555.8 C143.8 552.5 143.6 550.6 144.4 549.2 Z" fill="#fff" stroke="#111" stroke-width="2.6"/>
<path d="M144.4 549.2 C145.2 547.8 144.3 547.6 148.2 547.3 C152.1 547.0 164.1 546.4 168.0 547.3 C171.9 548.2 169.8 550.9 171.8 552.9 C173.9 554.9 177.5 557.5 180.3 559.5 C183.1 561.5 186.0 563.5 188.8 565.2 C191.6 566.9 195.3 569.6 197.3 569.9 C199.3 570.2 198.8 567.1 201.0 567.1 C203.2 567.1 206.7 569.3 210.5 569.9 C214.3 570.5 219.8 569.5 223.7 570.8 C227.6 572.1 231.8 575.1 234.1 577.5 C236.4 579.9 235.5 581.7 237.8 585.0 C240.2 588.3 245.2 593.2 248.2 597.3 C251.2 601.4 253.3 605.7 255.8 609.5 C258.3 613.3 260.5 616.6 263.3 619.9 C266.1 623.2 269.7 626.5 272.7 629.3 C275.7 632.1 279.3 633.8 281.2 636.9 C283.1 640.0 283.3 643.8 284.1 648.2 C284.9 652.6 286.0 659.8 286.0 663.3 C286.0 666.8 286.6 668.0 284.1 669.0 C281.6 670.0 274.3 669.6 270.8 669.0 C267.3 668.4 267.1 666.2 263.3 665.2 C259.5 664.2 252.6 663.3 248.2 663.3 C243.8 663.3 240.1 665.7 236.9 665.2 C233.8 664.7 232.8 660.4 229.3 660.5 C225.8 660.6 221.4 666.3 216.1 666.1 C210.8 665.9 202.3 662.2 197.3 659.5 C192.3 656.8 188.8 653.2 186.0 650.1 C183.2 647.0 182.5 644.5 180.3 640.7 C178.1 636.9 174.9 631.6 172.7 627.5 C170.5 623.4 170.2 620.5 167.1 616.1 C164.0 611.7 157.5 606.2 153.9 601.0 C150.3 595.8 147.3 590.3 145.4 585.0 C143.5 579.7 142.8 573.9 142.5 569.0 C142.2 564.1 143.2 559.1 143.5 555.8 C143.8 552.5 143.6 550.6 144.4 549.2 Z" fill="none" stroke="#fff" stroke-width="1.0"/>
<circle cx="144.4" cy="549.2" r="2.5" fill="#fff" stroke="#111" stroke-width="0.9"/>
<circle cx="144.4" cy="549.2" r="1.0" fill="none" stroke="#111" stroke-width="0.7"/>
<circle cx="168" cy="547.3" r="2.5" fill="#fff" stroke="#111" stroke-width="0.9"/>
<circle cx="168" cy="547.3" r="1.0" fill="none" stroke="#111" stroke-width="0.7"/>
<circle cx="188.8" cy="565.2" r="2.5" fill="#fff" stroke="#111" stroke-width="0.9"/>
<circle cx="188.8" cy="565.2" r="1.0" fill="none" stroke="#111" stroke-width="0.7"/>
<circle cx="201" cy="567.1" r="2.5" fill="#fff" stroke="#111" stroke-width="0.9"/>
<circle cx="201" cy="567.1" r="1.0" fill="none" stroke="#111" stroke-width="0.7"/>
<circle cx="223.7" cy="570.8" r="2.5" fill="#fff" stroke="#111" stroke-width="0.9"/>
<circle cx="223.7" cy="570.8" r="1.0" fill="none" stroke="#111" stroke-width="0.7"/>
<circle cx="228" cy="573" r="2.5" fill="#fff" stroke="#111" stroke-width="0.9"/>
<circle cx="228" cy="573" r="1.0" fill="none" stroke="#111" stroke-width="0.7"/>
<circle cx="234.1" cy="577.5" r="2.5" fill="#fff" stroke="#111" stroke-width="0.9"/>
<circle cx="234.1" cy="577.5" r="1.0" fill="none" stroke="#111" stroke-width="0.7"/>
<circle cx="255.8" cy="609.5" r="2.5" fill="#fff" stroke="#111" stroke-width="0.9"/>
<circle cx="255.8" cy="609.5" r="1.0" fill="none" stroke="#111" stroke-width="0.7"/>
<circle cx="281.2" cy="636.9" r="2.5" fill="#fff" stroke="#111" stroke-width="0.9"/>
<circle cx="281.2" cy="636.9" r="1.0" fill="none" stroke="#111" stroke-width="0.7"/>
<circle cx="284.1" cy="669" r="2.5" fill="#fff" stroke="#111" stroke-width="0.9"/>
<circle cx="284.1" cy="669" r="1.0" fill="none" stroke="#111" stroke-width="0.7"/>
<circle cx="229.3" cy="660.5" r="2.5" fill="#fff" stroke="#111" stroke-width="0.9"/>
<circle cx="229.3" cy="660.5" r="1.0" fill="none" stroke="#111" stroke-width="0.7"/>
<circle cx="216.1" cy="666.1" r="2.5" fill="#fff" stroke="#111" stroke-width="0.9"/>
<circle cx="216.1" cy="666.1" r="1.0" fill="none" stroke="#111" stroke-width="0.7"/>
<circle cx="186" cy="650.1" r="2.5" fill="#fff" stroke="#111" stroke-width="0.9"/>
<circle cx="186" cy="650.1" r="1.0" fill="none" stroke="#111" stroke-width="0.7"/>
<circle cx="167.1" cy="616.1" r="2.5" fill="#fff" stroke="#111" stroke-width="0.9"/>
<circle cx="167.1" cy="616.1" r="1.0" fill="none" stroke="#111" stroke-width="0.7"/>
<circle cx="145.4" cy="585" r="2.5" fill="#fff" stroke="#111" stroke-width="0.9"/>
<circle cx="145.4" cy="585" r="1.0" fill="none" stroke="#111" stroke-width="0.7"/>
<path d="M189.7 627.5 L199.2 624.6 L204.8 629.3 L211.4 642.5 L210.5 653.9 L202.9 656.7 L193.5 652 L187.8 640.7 Z" fill="none" stroke="#111" stroke-width="0.9" stroke-linejoin="round" />
<path d="M197.3 578.4 L199.0 600.0 L201.0 625.6" fill="none" stroke="#222" stroke-width="0.8" />
<path d="M199.2 576.5 L214.2 573.7 L233.1 582.2 L244.4 593.5 L251.0 607.6" fill="none" stroke="#222" stroke-width="0.7" />
<path d="M199.5 579.0 L214.0 576.5 L232.0 585.0 L243.0 596.0 L249.0 609.0" fill="none" stroke="#222" stroke-width="0.5" />
<path d="M223.7 652.0 L240.0 656.0 L267.1 661.4" fill="none" stroke="#222" stroke-width="0.6" />
<path d="M201.0 625.6 L215.0 648.0 L223.7 652.0" fill="none" stroke="#222" stroke-width="0.7" />
<line x1="151" y1="534" x2="154" y2="546" stroke="#222" stroke-width="0.6" />
<path d="M165.0 559.0 L172.0 563.0" fill="none" stroke="#222" stroke-width="0.5" />
<path d="M166.0 562.0 L172.0 565.5" fill="none" stroke="#222" stroke-width="0.5" />
<path d="M160.0 575.0 L171.0 581.0" fill="none" stroke="#222" stroke-width="0.5" />
<path d="M162.0 578.0 L172.0 584.0" fill="none" stroke="#222" stroke-width="0.5" />
<path d="M157.0 600.0 L165.0 610.0" fill="none" stroke="#222" stroke-width="0.5" />
<g transform="translate(157.8 664.8) rotate(62) scale(1 0.72)">
<circle cx="0" cy="0" r="21.5" fill="#fff" stroke="#111" stroke-width="1.1" vector-effect="non-scaling-stroke" />
</g>
<path d="M145.9 646.8 l1.8 -1.0 M147.5 646.1 l1.8 -1.0 M149.2 645.7 l1.8 -1.0 M151.0 645.5 l1.8 -1.0 M152.8 645.5 l1.8 -1.0 M154.7 645.9 l1.8 -1.0 M156.6 646.4 l1.8 -1.0 M158.5 647.2 l1.8 -1.0 M160.4 648.3 l1.8 -1.0 M162.2 649.5 l1.8 -1.0 M163.9 651.0 l1.8 -1.0 M165.6 652.7 l1.8 -1.0 M167.1 654.5 l1.8 -1.0 M168.5 656.5 l1.8 -1.0 M169.7 658.5 l1.8 -1.0 M170.7 660.7 l1.8 -1.0 M171.6 662.9 l1.8 -1.0 M172.2 665.2 l1.8 -1.0 M172.7 667.5 l1.8 -1.0 M172.9 669.7 l1.8 -1.0 M173.0 672.0 l1.8 -1.0 M172.8 674.1 l1.8 -1.0 M172.4 676.1 l1.8 -1.0 M171.8 678.0 l1.8 -1.0 M171.0 679.8 l1.8 -1.0 M170.0 681.3 l1.8 -1.0 M168.9 682.7 l1.8 -1.0 M167.6 683.9 l1.8 -1.0" stroke="#333" stroke-width="0.7"/>
<g transform="translate(156 665.8) rotate(62) scale(1 0.72)">
<circle cx="0" cy="0" r="21.5" fill="#fff" stroke="#111" stroke-width="1.2" vector-effect="non-scaling-stroke" />
<circle cx="0" cy="0" r="19.9" fill="none" stroke="#111" stroke-width="0.8" vector-effect="non-scaling-stroke" />
<circle cx="0" cy="0" r="14.8" fill="none" stroke="#111" stroke-width="0.8" vector-effect="non-scaling-stroke" />
<circle cx="0" cy="0" r="12.4" fill="none" stroke="#111" stroke-width="1.1" vector-effect="non-scaling-stroke" />
</g>
<g transform="translate(154.6 666.6) rotate(62) scale(1 0.72)">
<path d="M-11.5 -4 A12.2 12.2 0 0 0 6 10.5" fill="none" stroke="#111" stroke-width="1.6" vector-effect="non-scaling-stroke"/>
</g>
<line x1="141" y1="633" x2="145" y2="645" stroke="#222" stroke-width="0.6" />
<path d="M201.7 687.8 L222.2 676.3" stroke="#111" stroke-width="4.4" stroke-linecap="butt"/>
<path d="M201.7 687.8 L222.2 676.3" stroke="#fff" stroke-width="2.6000000000000005" stroke-linecap="butt"/>
<polygon points="204.5,689.4 201.7,691.0 198.9,689.4 198.9,686.2 201.7,684.6 204.5,686.2" fill="#fff" stroke="#111" stroke-width="1"/>
<circle cx="202.1" cy="687.5999999999999" r="1.3" fill="none" stroke="#444" stroke-width="0.6"/>
<path d="M254.5 681.8 L263 676.6" stroke="#111" stroke-width="4.4" stroke-linecap="butt"/>
<path d="M254.5 681.8 L263 676.6" stroke="#fff" stroke-width="2.6000000000000005" stroke-linecap="butt"/>
<polygon points="257.1,683.3 254.5,684.8 251.9,683.3 251.9,680.3 254.5,678.8 257.1,680.3" fill="#fff" stroke="#111" stroke-width="1"/>
<circle cx="254.9" cy="681.5999999999999" r="1.3" fill="none" stroke="#444" stroke-width="0.6"/>
<path d="M224.0 674.0 L248.0 661.0" fill="none" stroke="#222" stroke-width="0.7" />
<path d="M264.0 676.0 L288.5 662.0 L362.9 620.4" fill="none" stroke="#222" stroke-width="0.7" stroke-dasharray="18 3 2 3"/>
<line x1="215" y1="685" x2="218.5" y2="693" stroke="#222" stroke-width="0.6" />
<line x1="259" y1="686" x2="264" y2="694" stroke="#222" stroke-width="0.6" />
<line x1="300" y1="210" x2="305" y2="224" stroke="#222" stroke-width="0.6" />
<line x1="240" y1="255" x2="246" y2="268" stroke="#222" stroke-width="0.6" />
<line x1="126" y1="283" x2="126" y2="294" stroke="#222" stroke-width="0.6" />
<rect x="235" y="246" width="7" height="9" fill="#ffff00"/>
<text x="238.5" y="253.2" font-family="Liberation Sans" font-weight="bold" font-size="7.6" fill="#111" text-anchor="middle" letter-spacing="-0.3">1</text>
<rect x="119" y="273" width="11" height="9" fill="#ffff00"/>
<text x="124.5" y="280.2" font-family="Liberation Sans" font-weight="bold" font-size="7.6" fill="#111" text-anchor="middle" letter-spacing="-0.3">14</text>
<rect x="83" y="309" width="11" height="9" fill="#ffff00"/>
<text x="88.5" y="316.2" font-family="Liberation Sans" font-weight="bold" font-size="7.6" fill="#111" text-anchor="middle" letter-spacing="-0.3">10</text>
<rect x="130" y="310" width="11" height="9" fill="#ffff00"/>
<text x="135.5" y="317.2" font-family="Liberation Sans" font-weight="bold" font-size="7.6" fill="#111" text-anchor="middle" letter-spacing="-0.3">11</text>
<rect x="60" y="350" width="11" height="9" fill="#ffff00"/>
<text x="65.5" y="357.2" font-family="Liberation Sans" font-weight="bold" font-size="7.6" fill="#111" text-anchor="middle" letter-spacing="-0.3">12</text>
<rect x="40" y="371" width="11" height="9" fill="#ffff00"/>
<text x="45.5" y="378.2" font-family="Liberation Sans" font-weight="bold" font-size="7.6" fill="#111" text-anchor="middle" letter-spacing="-0.3">13</text>
<rect x="163" y="357" width="11" height="9" fill="#ffff00"/>
<text x="168.5" y="364.2" font-family="Liberation Sans" font-weight="bold" font-size="7.6" fill="#111" text-anchor="middle" letter-spacing="-0.3">19</text>
<rect x="181" y="448" width="7" height="9" fill="#ffff00"/>
<text x="184.5" y="455.2" font-family="Liberation Sans" font-weight="bold" font-size="7.6" fill="#111" text-anchor="middle" letter-spacing="-0.3">7</text>
<rect x="191" y="439" width="11" height="9" fill="#ffff00"/>
<text x="196.5" y="446.2" font-family="Liberation Sans" font-weight="bold" font-size="7.6" fill="#111" text-anchor="middle" letter-spacing="-0.3">15</text>
<rect x="198" y="481" width="11" height="9" fill="#ffff00"/>
<text x="203.5" y="488.2" font-family="Liberation Sans" font-weight="bold" font-size="7.6" fill="#111" text-anchor="middle" letter-spacing="-0.3">16</text>
<rect x="43" y="503" width="7" height="9" fill="#ffff00"/>
<text x="46.5" y="510.2" font-family="Liberation Sans" font-weight="bold" font-size="7.6" fill="#111" text-anchor="middle" letter-spacing="-0.3">9</text>
<rect x="79" y="503" width="7" height="9" fill="#ffff00"/>
<text x="82.5" y="510.2" font-family="Liberation Sans" font-weight="bold" font-size="7.6" fill="#111" text-anchor="middle" letter-spacing="-0.3">8</text>
<rect x="136" y="505" width="7" height="9" fill="#ffff00"/>
<text x="139.5" y="512.2" font-family="Liberation Sans" font-weight="bold" font-size="7.6" fill="#111" text-anchor="middle" letter-spacing="-0.3">6</text>
<rect x="221" y="481" width="7" height="9" fill="#ffff00"/>
<text x="224.5" y="488.2" font-family="Liberation Sans" font-weight="bold" font-size="7.6" fill="#111" text-anchor="middle" letter-spacing="-0.3">4</text>
<rect x="147" y="525" width="7" height="9" fill="#ffff00"/>
<text x="150.5" y="532.2" font-family="Liberation Sans" font-weight="bold" font-size="7.6" fill="#111" text-anchor="middle" letter-spacing="-0.3">3</text>
<rect x="138" y="624" width="7" height="9" fill="#ffff00"/>
<text x="141.5" y="631.2" font-family="Liberation Sans" font-weight="bold" font-size="7.6" fill="#111" text-anchor="middle" letter-spacing="-0.3">5</text>
<rect x="215" y="694" width="11" height="9" fill="#ffff00"/>
<text x="220.5" y="701.2" font-family="Liberation Sans" font-weight="bold" font-size="7.6" fill="#111" text-anchor="middle" letter-spacing="-0.3">17</text>
<rect x="261" y="694" width="11" height="9" fill="#ffff00"/>
<text x="266.5" y="701.2" font-family="Liberation Sans" font-weight="bold" font-size="7.6" fill="#111" text-anchor="middle" letter-spacing="-0.3">18</text>
<rect x="293" y="200" width="7" height="9" fill="#ff7a7a"/>
<text x="296.5" y="207.2" font-family="Liberation Sans" font-weight="bold" font-size="7.6" fill="#111" text-anchor="middle" letter-spacing="-0.3">2</text>
</svg>
<div class="ab hd" style="left:417px;width:79px"></div>
<div class="ab hd" style="left:497px;width:57px"></div>
<div class="ab ht" style="left:502px">Symbol(s)</div>
<div class="ab hd" style="left:555px;width:44px"></div>
<div class="ab ht" style="left:560px">Item</div>
<div class="ab hd" style="left:600px;width:93px"></div>
<div class="ab ht" style="left:605px">Parts No.</div>
<div class="ab hd" style="left:694px;width:35px"></div>
<div class="ab ht" style="left:699px">Qty.</div>
<div class="ab hd" style="left:730px;width:87px"></div>
<div class="ab ht" style="left:735px">Latest Part No.</div>
<div class="ab hd" style="left:818px;width:165px"></div>
<div class="ab ht" style="left:823px">Description</div>
<div class="ab hd" style="left:984px;width:56px"></div>
<div class="ab ht" style="left:989px">Cut Out</div>
<div class="ab hd" style="left:1041px;width:66px"></div>
<div class="ab ht" style="left:1046px">Cut In</div>
<div class="ab hd" style="left:1108px;width:64px"></div>
<div class="ab ht" style="left:1113px">Comment</div>
<svg class="ab" style="left:444px;top:29px" width="17" height="16"><use href="#hdicon"/></svg>
<div class="ab hl" style="left:417px;top:66px;width:755px"></div>
<svg class="ab" style="left:422px;top:50px" width="12" height="12"><use href="#gear"/></svg>
<svg class="ab" style="left:438px;top:49px" width="17" height="14"><use href="#cart"/></svg>
<svg class="ab" style="left:457px;top:49px" width="15" height="15"><use href="#info"/></svg>
<svg class="ab" style="left:502px;top:51px" width="12" height="11"><use href="#xicon"/></svg>
<div class="ab tx" style="left:558px;top:47px;color:#000">1</div>
<div class="ab tx" style="left:603px;top:47px;color:#000">T407493</div>
<div class="ab tx" style="left:697px;top:47px;color:#000">1</div>
<div class="ab tx" style="left:733px;top:47px;color:#000">T407493</div>
<div class="ab tx" style="left:821px;top:47px;color:#000">TIMING CASE</div>
<div class="ab hl" style="left:417px;top:86px;width:755px"></div>
<svg class="ab" style="left:422px;top:70px" width="12" height="12"><use href="#gear"/></svg>
<svg class="ab" style="left:438px;top:69px" width="17" height="14"><use href="#cart"/></svg>
<svg class="ab" style="left:457px;top:69px" width="15" height="15"><use href="#info"/></svg>
<div class="ab tx" style="left:558px;top:67px;color:#000">1</div>
<div class="ab tx" style="left:603px;top:67px;color:#000">T426831</div>
<div class="ab tx" style="left:697px;top:67px;color:#000">1</div>
<div class="ab tx" style="left:733px;top:67px;color:#000">T426831</div>
<div class="ab tx" style="left:821px;top:67px;color:#000">TIMING CASE</div>
<div class="ab hl" style="left:417px;top:106px;width:755px"></div>
<svg class="ab" style="left:422px;top:90px" width="12" height="12"><use href="#gear"/></svg>
<svg class="ab" style="left:438px;top:89px" width="17" height="14"><use href="#cart"/></svg>
<svg class="ab" style="left:457px;top:89px" width="15" height="15"><use href="#info"/></svg>
<svg class="ab" style="left:502px;top:91px" width="12" height="11"><use href="#xicon"/></svg>
<svg class="ab" style="left:517px;top:88px" width="17" height="16"><use href="#bookmag"/></svg>
<div class="ab tx" style="left:558px;top:87px;color:#000">1</div>
<div class="ab tx" style="left:603px;top:87px;color:#000">T407493</div>
<div class="ab tx" style="left:697px;top:87px;color:#000">1</div>
<div class="ab tx" style="left:733px;top:87px;color:#000">T407493</div>
<div class="ab tx" style="left:821px;top:87px;color:#000">TIMING CASE</div>
<div class="ab sel" style="left:417px;top:107px;width:79px"></div>
<div class="ab sel" style="left:497px;top:107px;width:57px"></div>
<div class="ab sel" style="left:555px;top:107px;width:44px"></div>
<div class="ab sel" style="left:600px;top:107px;width:93px"></div>
<div class="ab sel" style="left:694px;top:107px;width:35px"></div>
<div class="ab sel" style="left:730px;top:107px;width:87px"></div>
<div class="ab sel" style="left:818px;top:107px;width:165px"></div>
<div class="ab sel" style="left:984px;top:107px;width:56px"></div>
<div class="ab sel" style="left:1041px;top:107px;width:66px"></div>
<div class="ab sel" style="left:1108px;top:107px;width:64px"></div>
<div class="ab hl" style="left:417px;top:126px;width:755px"></div>
<svg class="ab" style="left:422px;top:110px" width="12" height="12"><use href="#gear"/></svg>
<svg class="ab" style="left:438px;top:109px" width="17" height="14"><use href="#carts"/></svg>
<svg class="ab" style="left:457px;top:109px" width="15" height="15"><use href="#info"/></svg>
<div class="ab tx" style="left:558px;top:107px;color:#fff">2</div>
<div class="ab tx" style="left:603px;top:107px;color:#fff">T406050</div>
<div class="ab tx" style="left:697px;top:107px;color:#fff">1</div>
<div class="ab tx" style="left:733px;top:107px;color:#fff">T406050</div>
<div class="ab tx" style="left:821px;top:107px;color:#fff">GASKET - TIMING CASE</div>
<div class="ab hl" style="left:417px;top:146px;width:755px"></div>
<svg class="ab" style="left:422px;top:130px" width="12" height="12"><use href="#gear"/></svg>
<svg class="ab" style="left:438px;top:129px" width="17" height="14"><use href="#cart"/></svg>
<svg class="ab" style="left:457px;top:129px" width="15" height="15"><use href="#info"/></svg>
<div class="ab tx" style="left:558px;top:127px;color:#000">3</div>
<div class="ab tx" style="left:603px;top:127px;color:#000">T410622</div>
<div class="ab tx" style="left:697px;top:127px;color:#000">1</div>
<div class="ab tx" style="left:733px;top:127px;color:#000">T410622</div>
<div class="ab tx" style="left:821px;top:127px;color:#000">TIMING COVER</div>
<div class="ab hl" style="left:417px;top:166px;width:755px"></div>
<svg class="ab" style="left:422px;top:150px" width="12" height="12"><use href="#gear"/></svg>
<svg class="ab" style="left:438px;top:149px" width="17" height="14"><use href="#cart"/></svg>
<svg class="ab" style="left:457px;top:149px" width="15" height="15"><use href="#info"/></svg>
<div class="ab tx" style="left:558px;top:147px;color:#000">4</div>
<div class="ab tx" style="left:603px;top:147px;color:#000">T405824</div>
<div class="ab tx" style="left:697px;top:147px;color:#000">1</div>
<div class="ab tx" style="left:733px;top:147px;color:#000">T405824</div>
<div class="ab tx" style="left:821px;top:147px;color:#000">GASKET - TIMING CASE COVER</div>
<div class="ab hl" style="left:417px;top:186px;width:755px"></div>
<svg class="ab" style="left:422px;top:170px" width="12" height="12"><use href="#gear"/></svg>
<svg class="ab" style="left:438px;top:169px" width="17" height="14"><use href="#cart"/></svg>
<svg class="ab" style="left:459px;top:168px" width="11" height="17"><use href="#book"/></svg>
<svg class="ab" style="left:475px;top:169px" width="15" height="15"><use href="#info"/></svg>
<div class="ab tx" style="left:558px;top:167px;color:#000">5</div>
<div class="ab tx" style="left:603px;top:167px;color:#000">T410666</div>
<div class="ab tx" style="left:697px;top:167px;color:#000">1</div>
<div class="ab tx" style="left:733px;top:167px;color:#000">T410666</div>
<div class="ab tx" style="left:821px;top:167px;color:#000">SEAL - FRONT END OIL</div>
<div class="ab hl" style="left:417px;top:206px;width:755px"></div>
<svg class="ab" style="left:422px;top:190px" width="12" height="12"><use href="#gear"/></svg>
<svg class="ab" style="left:438px;top:189px" width="17" height="14"><use href="#cart"/></svg>
<svg class="ab" style="left:457px;top:189px" width="15" height="15"><use href="#info"/></svg>
<div class="ab tx" style="left:558px;top:187px;color:#000">6</div>
<div class="ab tx" style="left:603px;top:187px;color:#000">T406093</div>
<div class="ab tx" style="left:697px;top:187px;color:#000">1</div>
<div class="ab tx" style="left:733px;top:187px;color:#000">T406093</div>
<div class="ab tx" style="left:821px;top:187px;color:#000">IDLER GEAR</div>
<div class="ab hl" style="left:417px;top:226px;width:755px"></div>
<svg class="ab" style="left:422px;top:210px" width="12" height="12"><use href="#gear"/></svg>
<svg class="ab" style="left:438px;top:209px" width="17" height="14"><use href="#cart"/></svg>
<svg class="ab" style="left:457px;top:209px" width="15" height="15"><use href="#info"/></svg>
<div class="ab tx" style="left:558px;top:207px;color:#000">7</div>
<div class="ab tx" style="left:603px;top:207px;color:#000">T416351</div>
<div class="ab tx" style="left:697px;top:207px;color:#000">1</div>
<div class="ab tx" style="left:733px;top:207px;color:#000">T416351</div>
<div class="ab tx" style="left:821px;top:207px;color:#000">HUB</div>
<div class="ab hl" style="left:417px;top:246px;width:755px"></div>
<svg class="ab" style="left:422px;top:230px" width="12" height="12"><use href="#gear"/></svg>
<svg class="ab" style="left:438px;top:229px" width="17" height="14"><use href="#cart"/></svg>
<svg class="ab" style="left:457px;top:229px" width="15" height="15"><use href="#sicon"/></svg>
<svg class="ab" style="left:475px;top:229px" width="15" height="15"><use href="#info"/></svg>
<svg class="ab" style="left:500px;top:228px" width="17" height="16"><use href="#bookmag"/></svg>
<div class="ab tx" style="left:558px;top:227px;color:#000">7</div>
<div class="ab tx" style="left:603px;top:227px;color:#000">T406834</div>
<div class="ab tx" style="left:697px;top:227px;color:#000">1</div>
<div class="ab tx" style="left:733px;top:227px;color:#000">T416351</div>
<div class="ab tx" style="left:821px;top:227px;color:#000">HUB</div>
<div class="ab hl" style="left:417px;top:266px;width:755px"></div>
<svg class="ab" style="left:422px;top:250px" width="12" height="12"><use href="#gear"/></svg>
<svg class="ab" style="left:438px;top:249px" width="17" height="14"><use href="#cart"/></svg>
<svg class="ab" style="left:457px;top:249px" width="15" height="15"><use href="#info"/></svg>
<div class="ab tx" style="left:558px;top:247px;color:#000">8</div>
<div class="ab tx" style="left:603px;top:247px;color:#000">T406040</div>
<div class="ab tx" style="left:697px;top:247px;color:#000">1</div>
<div class="ab tx" style="left:733px;top:247px;color:#000">T406040</div>
<div class="ab tx" style="left:821px;top:247px;color:#000">PLATE</div>
<div class="ab hl" style="left:417px;top:286px;width:755px"></div>
<svg class="ab" style="left:422px;top:270px" width="12" height="12"><use href="#gear"/></svg>
<svg class="ab" style="left:438px;top:269px" width="17" height="14"><use href="#cart"/></svg>
<svg class="ab" style="left:457px;top:269px" width="15" height="15"><use href="#info"/></svg>
<div class="ab tx" style="left:558px;top:267px;color:#000">9</div>
<div class="ab tx" style="left:603px;top:267px;color:#000">2314J010</div>
<div class="ab tx" style="left:697px;top:267px;color:#000">3</div>
<div class="ab tx" style="left:733px;top:267px;color:#000">2314J010</div>
<div class="ab tx" style="left:821px;top:267px;color:#000">SCREW</div>
<div class="ab hl" style="left:417px;top:306px;width:755px"></div>
<svg class="ab" style="left:422px;top:290px" width="12" height="12"><use href="#gear"/></svg>
<svg class="ab" style="left:438px;top:289px" width="17" height="14"><use href="#cart"/></svg>
<svg class="ab" style="left:457px;top:289px" width="15" height="15"><use href="#info"/></svg>
<div class="ab tx" style="left:558px;top:287px;color:#000">10</div>
<div class="ab tx" style="left:603px;top:287px;color:#000">T407464</div>
<div class="ab tx" style="left:697px;top:287px;color:#000">1</div>
<div class="ab tx" style="left:733px;top:287px;color:#000">T407464</div>
<div class="ab tx" style="left:821px;top:287px;color:#000">CAMSHAFT GEAR</div>
<div class="ab hl" style="left:417px;top:326px;width:755px"></div>
<svg class="ab" style="left:422px;top:310px" width="12" height="12"><use href="#gear"/></svg>
<svg class="ab" style="left:438px;top:309px" width="17" height="14"><use href="#cart"/></svg>
<svg class="ab" style="left:457px;top:309px" width="15" height="15"><use href="#info"/></svg>
<div class="ab tx" style="left:558px;top:307px;color:#000">11</div>
<div class="ab tx" style="left:603px;top:307px;color:#000">3112X011</div>
<div class="ab tx" style="left:697px;top:307px;color:#000">1</div>
<div class="ab tx" style="left:733px;top:307px;color:#000">3112X011</div>
<div class="ab tx" style="left:821px;top:307px;color:#000">THRUST WASHER</div>
<div class="ab hl" style="left:417px;top:346px;width:755px"></div>
<svg class="ab" style="left:422px;top:330px" width="12" height="12"><use href="#gear"/></svg>
<svg class="ab" style="left:438px;top:329px" width="17" height="14"><use href="#cart"/></svg>
<svg class="ab" style="left:457px;top:329px" width="15" height="15"><use href="#info"/></svg>
<div class="ab tx" style="left:558px;top:327px;color:#000">12</div>
<div class="ab tx" style="left:603px;top:327px;color:#000">3321A003</div>
<div class="ab tx" style="left:697px;top:327px;color:#000">1</div>
<div class="ab tx" style="left:733px;top:327px;color:#000">3321A003</div>
<div class="ab tx" style="left:821px;top:327px;color:#000">WASHER</div>
<div class="ab hl" style="left:417px;top:366px;width:755px"></div>
<svg class="ab" style="left:422px;top:350px" width="12" height="12"><use href="#gear"/></svg>
<svg class="ab" style="left:438px;top:349px" width="17" height="14"><use href="#cart"/></svg>
<svg class="ab" style="left:457px;top:349px" width="15" height="15"><use href="#info"/></svg>
<div class="ab tx" style="left:558px;top:347px;color:#000">13</div>
<div class="ab tx" style="left:603px;top:347px;color:#000">2314J606</div>
<div class="ab tx" style="left:697px;top:347px;color:#000">1</div>
<div class="ab tx" style="left:733px;top:347px;color:#000">2314J606</div>
<div class="ab tx" style="left:821px;top:347px;color:#000">SCREW</div>
<div class="ab hl" style="left:417px;top:386px;width:755px"></div>
<svg class="ab" style="left:422px;top:370px" width="12" height="12"><use href="#gear"/></svg>
<svg class="ab" style="left:438px;top:369px" width="17" height="14"><use href="#cart"/></svg>
<svg class="ab" style="left:457px;top:369px" width="15" height="15"><use href="#info"/></svg>
<div class="ab tx" style="left:558px;top:367px;color:#000">14</div>
<div class="ab tx" style="left:603px;top:367px;color:#000">2314H003</div>
<div class="ab tx" style="left:697px;top:367px;color:#000">7</div>
<div class="ab tx" style="left:733px;top:367px;color:#000">2314H003</div>
<div class="ab tx" style="left:821px;top:367px;color:#000">SCREW</div>
<div class="ab hl" style="left:417px;top:406px;width:755px"></div>
<svg class="ab" style="left:422px;top:390px" width="12" height="12"><use href="#gear"/></svg>
<svg class="ab" style="left:438px;top:389px" width="17" height="14"><use href="#cart"/></svg>
<svg class="ab" style="left:459px;top:388px" width="11" height="17"><use href="#book"/></svg>
<svg class="ab" style="left:475px;top:389px" width="15" height="15"><use href="#info"/></svg>
<div class="ab tx" style="left:558px;top:387px;color:#000">15</div>
<div class="ab tx" style="left:603px;top:387px;color:#000">2314H006</div>
<div class="ab tx" style="left:697px;top:387px;color:#000">2</div>
<div class="ab tx" style="left:733px;top:387px;color:#000">2314H006</div>
<div class="ab tx" style="left:821px;top:387px;color:#000">BOLT</div>
<div class="ab hl" style="left:417px;top:426px;width:755px"></div>
<svg class="ab" style="left:422px;top:410px" width="12" height="12"><use href="#gear"/></svg>
<svg class="ab" style="left:438px;top:409px" width="17" height="14"><use href="#cart"/></svg>
<svg class="ab" style="left:457px;top:409px" width="15" height="15"><use href="#info"/></svg>
<div class="ab tx" style="left:558px;top:407px;color:#000">16</div>
<div class="ab tx" style="left:603px;top:407px;color:#000">2314H034</div>
<div class="ab tx" style="left:697px;top:407px;color:#000">3</div>
<div class="ab tx" style="left:733px;top:407px;color:#000">2314H034</div>
<div class="ab tx" style="left:821px;top:407px;color:#000">SCREW</div>
<div class="ab hl" style="left:417px;top:446px;width:755px"></div>
<svg class="ab" style="left:422px;top:430px" width="12" height="12"><use href="#gear"/></svg>
<svg class="ab" style="left:438px;top:429px" width="17" height="14"><use href="#cart"/></svg>
<svg class="ab" style="left:457px;top:429px" width="15" height="15"><use href="#info"/></svg>
<div class="ab tx" style="left:558px;top:427px;color:#000">17</div>
<div class="ab tx" style="left:603px;top:427px;color:#000">2314H012</div>
<div class="ab tx" style="left:697px;top:427px;color:#000">6</div>
<div class="ab tx" style="left:733px;top:427px;color:#000">2314H012</div>
<div class="ab tx" style="left:821px;top:427px;color:#000">SCREW</div>
<div class="ab hl" style="left:417px;top:466px;width:755px"></div>
<svg class="ab" style="left:422px;top:450px" width="12" height="12"><use href="#gear"/></svg>
<svg class="ab" style="left:438px;top:449px" width="17" height="14"><use href="#cart"/></svg>
<svg class="ab" style="left:457px;top:449px" width="15" height="15"><use href="#info"/></svg>
<div class="ab tx" style="left:558px;top:447px;color:#000">18</div>
<div class="ab tx" style="left:603px;top:447px;color:#000">2314H003</div>
<div class="ab tx" style="left:697px;top:447px;color:#000">10</div>
<div class="ab tx" style="left:733px;top:447px;color:#000">2314H003</div>
<div class="ab tx" style="left:821px;top:447px;color:#000">SCREW</div>
<div class="ab hl" style="left:417px;top:486px;width:755px"></div>
<svg class="ab" style="left:422px;top:470px" width="12" height="12"><use href="#gear"/></svg>
<svg class="ab" style="left:438px;top:469px" width="17" height="14"><use href="#cart"/></svg>
<svg class="ab" style="left:457px;top:469px" width="15" height="15"><use href="#info"/></svg>
<div class="ab tx" style="left:558px;top:467px;color:#000">19</div>
<div class="ab tx" style="left:603px;top:467px;color:#000">2116053</div>
<div class="ab tx" style="left:697px;top:467px;color:#000">1</div>
<div class="ab tx" style="left:733px;top:467px;color:#000">2116053</div>
<div class="ab tx" style="left:821px;top:467px;color:#000">DOWEL</div>
<div class="ab vl" style="left:496px;top:47px;height:440px"></div>
<div class="ab vl" style="left:554px;top:47px;height:440px"></div>
<div class="ab vl" style="left:599px;top:47px;height:440px"></div>
<div class="ab vl" style="left:693px;top:47px;height:440px"></div>
<div class="ab vl" style="left:729px;top:47px;height:440px"></div>
<div class="ab vl" style="left:817px;top:47px;height:440px"></div>
<div class="ab vl" style="left:983px;top:47px;height:440px"></div>
<div class="ab vl" style="left:1040px;top:47px;height:440px"></div>
<div class="ab vl" style="left:1107px;top:47px;height:440px"></div>
<div class="ab" style="left:496px;top:27px;width:1px;height:20px;background:#fff"></div>
<div class="ab" style="left:554px;top:27px;width:1px;height:20px;background:#fff"></div>
<div class="ab" style="left:599px;top:27px;width:1px;height:20px;background:#fff"></div>
<div class="ab" style="left:693px;top:27px;width:1px;height:20px;background:#fff"></div>
<div class="ab" style="left:729px;top:27px;width:1px;height:20px;background:#fff"></div>
<div class="ab" style="left:817px;top:27px;width:1px;height:20px;background:#fff"></div>
<div class="ab" style="left:983px;top:27px;width:1px;height:20px;background:#fff"></div>
<div class="ab" style="left:1040px;top:27px;width:1px;height:20px;background:#fff"></div>
<div class="ab" style="left:1107px;top:27px;width:1px;height:20px;background:#fff"></div>
<div class="ab" style="left:496px;top:107px;width:1px;height:19px;background:#fff"></div>
<div class="ab" style="left:554px;top:107px;width:1px;height:19px;background:#fff"></div>
<div class="ab" style="left:599px;top:107px;width:1px;height:19px;background:#fff"></div>
<div class="ab" style="left:693px;top:107px;width:1px;height:19px;background:#fff"></div>
<div class="ab" style="left:729px;top:107px;width:1px;height:19px;background:#fff"></div>
<div class="ab" style="left:817px;top:107px;width:1px;height:19px;background:#fff"></div>
<div class="ab" style="left:983px;top:107px;width:1px;height:19px;background:#fff"></div>
<div class="ab" style="left:1040px;top:107px;width:1px;height:19px;background:#fff"></div>
<div class="ab" style="left:1107px;top:107px;width:1px;height:19px;background:#fff"></div>
<svg class="ab" style="left:1128px;top:690px" width="44" height="52" viewBox="0 0 44 52">
<g fill="none" stroke="#1b5aa5" stroke-width="2.9">
<circle cx="12.6" cy="11.8" r="6.1"/><circle cx="29.6" cy="11.8" r="6.1"/>
<circle cx="12.6" cy="29.2" r="6.1"/><circle cx="29.6" cy="29.2" r="6.1"/>
</g>
<g stroke="#1b5aa5" stroke-width="2.4" stroke-linecap="butt">
<path d="M9 16.5 L17.8 7.5 M24.3 8 L33.4 16.7 M9 24.5 L17.8 33.6 M24.5 33.3 L33.4 24.3"/>
</g>
<g fill="#1b5aa5">
<path d="M20.8 3.2 L23.2 8.5 L18.4 8.5 Z"/><path d="M20.8 37.8 L23.2 32.5 L18.4 32.5 Z"/>
<path d="M3.8 20.5 L9 18.1 L9 22.9 Z"/><path d="M37.8 20.5 L32.6 18.1 L32.6 22.9 Z"/>
</g>
<text x="3.3" y="48.6" font-family="Liberation Sans" font-weight="bold" font-size="10.4" fill="#1b5aa5" letter-spacing="-0.35">Perkins</text>
<circle cx="40.5" cy="42.5" r="0.7" fill="#7a9cc8"/>
</svg>

</body></html>
